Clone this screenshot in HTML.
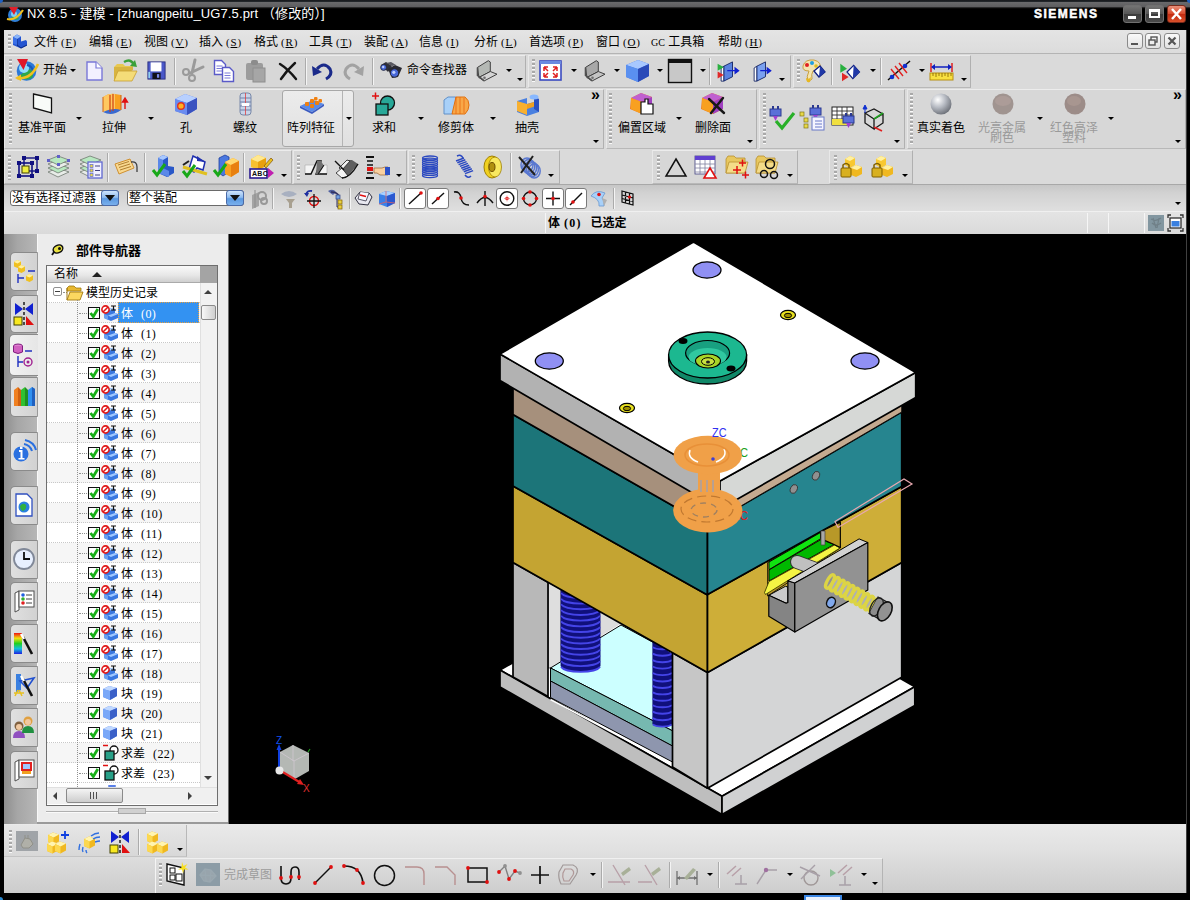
<!DOCTYPE html>
<html lang="zh-CN">
<head>
<meta charset="utf-8">
<title>NX 8.5 - 建模</title>
<style>
*{box-sizing:border-box;margin:0;padding:0}
html,body{width:1190px;height:900px;overflow:hidden;background:#000}
body{font-family:"Liberation Sans","Noto Sans CJK SC",sans-serif;font-size:12px;color:#000;position:relative}
.a{position:absolute;display:block}
.t{white-space:nowrap}
.title{font-family:"Liberation Sans","Noto Sans CJK SC",sans-serif}
.mk{font-family:"Liberation Serif","Noto Sans CJK SC",serif;letter-spacing:.8px;font-size:11px;margin-left:3px}
.nk{font-family:"Liberation Serif",serif;letter-spacing:.4px;font-size:12px}
.dd{width:0;height:0;border-left:3px solid transparent;border-right:3px solid transparent;border-top:3px solid #000}
.grip{width:3px;background:repeating-linear-gradient(#a9a9a9 0,#a9a9a9 2px,#fafafa 2px,#fafafa 3px,rgba(0,0,0,0) 3px,rgba(0,0,0,0) 4px)}
.sep{width:2px;border-left:1px solid #ababab;border-right:1px solid #f4f4f4}
svg{overflow:visible}
</style>
</head>
<body>
<div class="a " style="left:0px;top:0px;width:1190px;height:30px;background:linear-gradient(#15171a 0,#22262a 1.5px,#6a6a6c 2px,#5e5e60 6.5px,#101010 8px,#000 9px)"></div>
<div class="a " style="left:0px;top:0px;width:3px;height:3px;background:#2060c0;border-bottom-right-radius:3px"></div>
<div class="a " style="left:1187px;top:0px;width:3px;height:3px;background:#2060c0;border-bottom-left-radius:3px"></div>
<svg class="a" style="left:6px;top:5px;" width="19" height="18" viewBox="0 0 19 18"><circle cx="9" cy="10" r="7" fill="#2f7fd8"/><path d="M5 12q3 4 8 2l-2-4z" fill="#2fa84a"/><circle cx="8" cy="9" r="3" fill="#7fd0f8"/><path d="M3 2h9l-4 8z" fill="#e0202a"/><path d="M1 14q9 2 16-9" stroke="#f0c020" stroke-width="2.2" fill="none"/></svg>
<div class="a t title" style="left:27px;top:6px;font-size:13px;line-height:15px;color:#fff;letter-spacing:.12px;white-space:nowrap">NX 8.5 - 建模 - [zhuangpeitu_UG7.5.prt （修改的）]</div>
<div class="a t" style="left:1034px;top:7px;font-size:12px;line-height:14px;color:#fff;font-weight:bold;letter-spacing:1.5px;-webkit-text-stroke:.5px #fff">SIEMENS</div>
<div class="a " style="left:1123px;top:5px;width:19px;height:18px;border:1px solid #707070;border-radius:3px;background:linear-gradient(#747474,#565656 50%,#3c3c3c 51%,#4a4a4a)"></div>
<div class="a " style="left:1145px;top:5px;width:19px;height:18px;border:1px solid #707070;border-radius:3px;background:linear-gradient(#747474,#565656 50%,#3c3c3c 51%,#4a4a4a)"></div>
<div class="a " style="left:1128px;top:16px;width:8px;height:3px;background:#fff"></div>
<div class="a " style="left:1149px;top:9px;width:11px;height:9px;border:2px solid #fff;border-top-width:3px"></div>
<div class="a " style="left:1167px;top:5px;width:19px;height:18px;border:1px solid #7a2a1a;border-radius:3px;background:linear-gradient(#e8907a,#d8482a 50%,#c22a10 51%,#d8502a)"></div>
<svg class="a" style="left:1170px;top:8px;" width="13" height="12" viewBox="0 0 13 12"><path d="M2 1l9 10M11 1l-9 10" stroke="#fff" stroke-width="2.4"/></svg>
<div class="a " style="left:4px;top:30px;width:1182px;height:863px;background:#d8d8d8"></div>
<div class="a " style="left:1186px;top:30px;width:1px;height:863px;background:#404040"></div>
<div class="a " style="left:4px;top:892px;width:1183px;height:1px;background:#404040"></div>
<div class="a " style="left:4px;top:30px;width:1182px;height:24px;background:linear-gradient(#e4e4e4,#dcdcdc);border-bottom:1px solid #b4b4b4"></div>
<div class="a grip" style="left:8px;top:34px;height:16px"></div>
<svg class="a" style="left:12px;top:34px;" width="16" height="15" viewBox="0 0 16 15"><path d="M1 3l4-2.500 4 2v5l5-1.500 1 1.500v4l-6 3-8-3.500z" fill="#2454d0"/><path d="M1 3l4 2 4-2.500-4-2z" fill="#8ab4f8"/><path d="M5 5v6l4 3 6-3" stroke="#0c2a80" fill="none"/><path d="M1 3l4 2v6l-4-1.500z" fill="#3a70e8"/></svg>
<div class="a t" style="left:34px;top:35px;font-size:12px;line-height:14px;color:#000;">文件<span class="mk">(<u>F</u>)</span></div>
<div class="a t" style="left:89px;top:35px;font-size:12px;line-height:14px;color:#000;">编辑<span class="mk">(<u>E</u>)</span></div>
<div class="a t" style="left:144px;top:35px;font-size:12px;line-height:14px;color:#000;">视图<span class="mk">(<u>V</u>)</span></div>
<div class="a t" style="left:199px;top:35px;font-size:12px;line-height:14px;color:#000;">插入<span class="mk">(<u>S</u>)</span></div>
<div class="a t" style="left:254px;top:35px;font-size:12px;line-height:14px;color:#000;">格式<span class="mk">(<u>R</u>)</span></div>
<div class="a t" style="left:309px;top:35px;font-size:12px;line-height:14px;color:#000;">工具<span class="mk">(<u>T</u>)</span></div>
<div class="a t" style="left:364px;top:35px;font-size:12px;line-height:14px;color:#000;">装配<span class="mk">(<u>A</u>)</span></div>
<div class="a t" style="left:419px;top:35px;font-size:12px;line-height:14px;color:#000;">信息<span class="mk">(<u>I</u>)</span></div>
<div class="a t" style="left:474px;top:35px;font-size:12px;line-height:14px;color:#000;">分析<span class="mk">(<u>L</u>)</span></div>
<div class="a t" style="left:529px;top:35px;font-size:12px;line-height:14px;color:#000;">首选项<span class="mk">(<u>P</u>)</span></div>
<div class="a t" style="left:596px;top:35px;font-size:12px;line-height:14px;color:#000;">窗口<span class="mk">(<u>O</u>)</span></div>
<div class="a t" style="left:651px;top:35px;font-size:12px;line-height:14px;color:#000;"><span class="mk" style="letter-spacing:0;margin-left:0;font-size:10px">GC</span> 工具箱</div>
<div class="a t" style="left:718px;top:35px;font-size:12px;line-height:14px;color:#000;">帮助<span class="mk">(<u>H</u>)</span></div>
<div class="a " style="left:1127px;top:33px;width:16px;height:16px;border:1px solid #8a8a8a;border-radius:3px;background:linear-gradient(#fafafa,#e2e2e2)"></div>
<div class="a " style="left:1145px;top:33px;width:16px;height:16px;border:1px solid #8a8a8a;border-radius:3px;background:linear-gradient(#fafafa,#e2e2e2)"></div>
<div class="a " style="left:1164px;top:33px;width:16px;height:16px;border:1px solid #8a8a8a;border-radius:3px;background:linear-gradient(#fafafa,#e2e2e2)"></div>
<div class="a " style="left:1131px;top:43px;width:7px;height:2px;background:#555"></div>
<svg class="a" style="left:1148px;top:36px;" width="10" height="10" viewBox="0 0 10 10"><rect x="3" y="1" width="6" height="5" fill="none" stroke="#555" stroke-width="1.4"/><rect x="1" y="4" width="6" height="5" fill="#eee" stroke="#555" stroke-width="1.4"/></svg>
<svg class="a" style="left:1167px;top:36px;" width="10" height="10" viewBox="0 0 10 10"><path d="M1.5 1.5l7 7M8.500 1.5l-7 7" stroke="#555" stroke-width="2.2"/></svg>
<div class="a " style="left:4px;top:54px;width:1182px;height:34px;background:#dadada"></div>
<div class="a " style="left:4px;top:55px;width:522px;height:33px;border-top:1px solid #ececec;border-left:1px solid #e8e8e8;border-right:1px solid #b0b0b0;border-bottom:1px solid #b8b8b8;background:#d7d7d7"></div>
<div class="a grip" style="left:9px;top:59px;height:24px"></div>
<svg class="a" style="left:15px;top:57px;" width="25" height="26" viewBox="0 0 25 26"><circle cx="11.500" cy="14" r="9.800" fill="#2a78d8"/><path d="M4 19q6 6 13 2 3-5-2-9-5 2-11 7z" fill="#2ea84a"/><circle cx="9" cy="11" r="5" fill="#8fdcfb"/><path d="M12 8q5 1 6 6" stroke="#1a58b8" stroke-width="2" fill="none"/><path d="M2 2h11l-4.500 11z" fill="#e01828"/><path d="M2 21q14 2 21-14" stroke="#f0c020" stroke-width="2.600" fill="none"/><path d="M0 21l6-3.500 0 6.500z" fill="#f0c020"/></svg>
<div class="a t" style="left:43px;top:63px;font-size:12px;line-height:14px;color:#000;">开始</div>
<div class="a dd" style="left:70px;top:69px;border-top-color:#000"></div>
<svg class="a" style="left:85px;top:60px;" width="19" height="22" viewBox="0 0 19 22"><path d="M2 2h9l6 6v12h-15z" fill="#f2f0ff" stroke="#7a78d8" stroke-width="1.4"/><path d="M11 2v6h6" fill="#fff" stroke="#7a78d8" stroke-width="1.2"/></svg>
<svg class="a" style="left:112px;top:58px;" width="26" height="25" viewBox="0 0 26 25"><path d="M2 9l3-3h6l2 2h8v4z" fill="#e8c850"/><path d="M2 23v-14h19l-0 3z" fill="#d8b440"/><path d="M2 23l4-10h19l-5 10z" fill="#f4dc78" stroke="#c8a030" stroke-width=".8"/><path d="M12 4q7-4 10 3" stroke="#3aa03a" stroke-width="2.4" fill="none"/><path d="M18 8l7 1-2-7z" fill="#3aa03a"/></svg>
<svg class="a" style="left:147px;top:61px;" width="19" height="19" viewBox="0 0 21 21"><rect x="1" y="1" width="19" height="19" fill="#4a58c8" stroke="#2a2f80"/><rect x="4" y="1.500" width="12" height="10" fill="#fff"/><rect x="6" y="13" width="9" height="7" fill="#101018"/><rect x="11" y="14.500" width="2.500" height="4" fill="#7a88e8"/><rect x="1.500" y="12" width="2" height="7" fill="#8fd0f0"/></svg>
<div class="a sep" style="left:174px;top:58px;height:27px"></div>
<svg class="a" style="left:181px;top:59px;" width="25" height="23" viewBox="0 0 25 23"><path d="M14 1l-3 13M22 8l-13 6" stroke="#9a9a9a" stroke-width="3" stroke-linecap="round"/><circle cx="5" cy="13" r="3" fill="none" stroke="#9a9a9a" stroke-width="2"/><circle cx="11" cy="19" r="3" fill="none" stroke="#9a9a9a" stroke-width="2"/></svg>
<svg class="a" style="left:213px;top:59px;" width="23" height="24" viewBox="0 0 23 24"><path d="M1.500 1.500h7l4 4v10h-11z" fill="#fff" stroke="#5a5ac8" stroke-width="1.400"/><path d="M3.500 7h6M3.500 9.500h6M3.500 12h6" stroke="#7a7ad8"/>
    <path d="M9.500 8.500h7l4 4v10h-11z" fill="#fff" stroke="#5a5ac8" stroke-width="1.400"/><path d="M11.500 14h6M11.500 16.500h6M11.500 19h6" stroke="#7a7ad8"/></svg>
<svg class="a" style="left:245px;top:59px;" width="23" height="24" viewBox="0 0 23 24"><rect x="1" y="4" width="17" height="17" rx="2" fill="#9c9c9c"/><rect x="6" y="1" width="7" height="5" rx="2" fill="#8c8c8c"/><rect x="8" y="9" width="12" height="14" fill="#a6a6a6" stroke="#8e8e8e"/></svg>
<svg class="a" style="left:278px;top:62px;" width="20" height="18" viewBox="0 0 20 18"><path d="M2 2q8 5 16 15M17 1q-8 7-14 16" stroke="#151515" stroke-width="2.400" fill="none" stroke-linecap="round"/></svg>
<div class="a sep" style="left:305px;top:58px;height:27px"></div>
<svg class="a" style="left:311px;top:61px;" width="22" height="19" viewBox="0 0 22 19"><path d="M6 8q7-8 13 0 3 6-4 10" stroke="#1a2a8a" stroke-width="3" fill="none"/><path d="M1 5l1 10 9-4z" fill="#1a2a8a"/></svg>
<svg class="a" style="left:343px;top:61px;" width="22" height="19" viewBox="0 0 22 19"><path d="M16 8q-7-8-13 0-3 6 4 10" stroke="#a2a2a2" stroke-width="3" fill="none"/><path d="M21 5l-1 10-9-4z" fill="#a2a2a2"/></svg>
<div class="a sep" style="left:372px;top:58px;height:27px"></div>
<svg class="a" style="left:380px;top:61px;" width="23" height="20" viewBox="0 0 23 20"><path d="M1 4l5-3 6 4-4 6z" fill="#303038"/><path d="M8 8l7-4 7 3-4 9-6 1z" fill="#2a2a32"/><path d="M6 2l6 3 4-1-5-3z" fill="#585860"/><circle cx="3.600" cy="6.400" r="3" fill="#4868d8" stroke="#202028" stroke-width=".8"/><circle cx="14.500" cy="12" r="4.200" fill="#4868d8" stroke="#202028" stroke-width=".8"/><circle cx="13.800" cy="11.300" r="1.600" fill="#c0d0ff"/><circle cx="3.200" cy="6" r="1.200" fill="#c0d0ff"/></svg>
<div class="a t" style="left:407px;top:63px;font-size:12px;line-height:14px;color:#000;">命令查找器</div>
<svg class="a" style="left:474px;top:60px;" width="25" height="22" viewBox="0 0 25 22"><path d="M3.500 7.400l10.800-6.700 2 1.300v9.500l-11.400 6z" fill="#b4b8b4" stroke="#404040" stroke-width="1"/><path d="M4.900 17.500l11.400-6 6.700 2.700-12.800 6.700z" fill="#d4d4d4" stroke="#404040" stroke-width="1"/><path d="M3.500 7.400v8l6.700 5.500" fill="none" stroke="#505050" stroke-width="1.600"/><circle cx="10.500" cy="17.800" r="1.300" fill="#707070"/></svg>
<div class="a dd" style="left:506px;top:69px;border-top-color:#000"></div>
<div class="a dd" style="left:517px;top:78px;border-top-color:#000"></div>
<div class="a " style="left:528px;top:55px;width:263px;height:33px;border-top:1px solid #ececec;border-left:1px solid #e8e8e8;border-right:1px solid #b0b0b0;border-bottom:1px solid #b8b8b8;background:#d7d7d7"></div>
<div class="a grip" style="left:532px;top:59px;height:24px"></div>
<svg class="a" style="left:539px;top:60px;" width="23" height="21" viewBox="0 0 23 21"><rect x="1" y="1" width="21" height="19" fill="#fff" stroke="#3a4ac0" stroke-width="1.600"/><rect x="1" y="1" width="21" height="3" fill="#6a8ae0"/><path d="M5 7h4M5 7v4M5 7l4 4M18 7h-4M18 7v4M18 7l-4 4M5 17h4M5 17v-4M5 17l4-4M18 17h-4M18 17v-4M18 17l-4-4" stroke="#e02020" stroke-width="1.500"/></svg>
<div class="a dd" style="left:571px;top:69px;border-top-color:#000"></div>
<svg class="a" style="left:582px;top:60px;" width="25" height="22" viewBox="0 0 25 22"><path d="M3.500 7.400l10.800-6.700 2 1.300v9.500l-11.400 6z" fill="#a8a8a8" stroke="#404040" stroke-width="1"/><path d="M4.900 17.500l11.400-6 6.700 2.700-12.800 6.700z" fill="#c4c4c4" stroke="#404040" stroke-width="1"/><path d="M3.500 7.400v8l6.700 5.500" fill="none" stroke="#505050" stroke-width="1.600"/><circle cx="10.500" cy="17.800" r="1.300" fill="#707070"/></svg>
<div class="a dd" style="left:614px;top:69px;border-top-color:#000"></div>
<svg class="a" style="left:625px;top:59px;" width="25" height="24" viewBox="0 0 25 24"><path d="M1 6l12-5 11 4v12l-11 6-12-5z" fill="#4a78e0"/><path d="M1 6l12-5 11 4-11 5z" fill="#a8c8ff"/><path d="M13 10l11-5v12l-11 6z" fill="#2a4ab8"/><path d="M1 6l12 4v13l-12-5z" fill="#5a90f0"/></svg>
<div class="a dd" style="left:657px;top:69px;border-top-color:#000"></div>
<svg class="a" style="left:667px;top:58px;" width="26" height="26" viewBox="0 0 26 26"><rect x="1.500" y="1.500" width="23" height="23" fill="#c8c8c8" stroke="#101010" stroke-width="1.400"/><rect x="1" y="1" width="24" height="4" fill="#101010"/></svg>
<div class="a dd" style="left:700px;top:69px;border-top-color:#000"></div>
<div class="a sep" style="left:709px;top:58px;height:27px"></div>
<svg class="a" style="left:717px;top:61px;" width="24" height="21" viewBox="0 0 26 24"><path d="M7 6l10-5v17l-10 5z" fill="#5a82e0" stroke="#102060"/><path d="M4 8l3-2v17l-3 0z" fill="#fff" stroke="#102060"/><path d="M0 3l7 4-7 4z" fill="#2ab040"/><path d="M0 12l7 4-7 4z" fill="#e02828"/><path d="M11 11h12M20 8l4 3-4 3z" stroke="#1020d0" stroke-width="1.400" fill="#1020d0"/></svg>
<svg class="a" style="left:751px;top:61px;" width="22" height="21" viewBox="0 0 24 24"><path d="M6 6l10-5v17l-10 5z" fill="#7aa0f0" stroke="#102060"/><path d="M3 8l3-2v17l-3 0z" fill="#fff" stroke="#102060"/><path d="M10 11h11M18 8l4 3-4 3z" stroke="#1020d0" stroke-width="1.400" fill="#1020d0"/></svg>
<div class="a dd" style="left:779px;top:78px;border-top-color:#000"></div>
<div class="a " style="left:793px;top:55px;width:178px;height:33px;border-top:1px solid #ececec;border-left:1px solid #e8e8e8;border-right:1px solid #b0b0b0;border-bottom:1px solid #b8b8b8;background:#d7d7d7"></div>
<div class="a grip" style="left:797px;top:59px;height:24px"></div>
<svg class="a" style="left:800px;top:58px;" width="26" height="26" viewBox="0 0 26 26"><path d="M3 8q2-7 11-6 8 2 6 9-3 3-7 2-2 3-1 8l-4 3q-2-6 1-11-7 0-6-5z" fill="#f4e4b0" stroke="#c8a040"/><circle cx="7" cy="7" r="2" fill="#e02020"/><circle cx="12" cy="5" r="2" fill="#20a0e0"/><circle cx="16" cy="8" r="1.800" fill="#e0c020"/><path d="M14 13l6-5 5 6-6 5z" fill="#fff" stroke="#102080" stroke-width="1.300"/><path d="M20 8l5 6-6 5z" fill="#2038a8"/><path d="M6 20q3 2 5-1l-1 5q-4 1-4-4z" fill="#e8b820"/></svg>
<div class="a sep" style="left:831px;top:58px;height:27px"></div>
<svg class="a" style="left:838px;top:62px;" width="23" height="20" viewBox="0 0 26 24"><path d="M2 2l8 6-8 5z" fill="#28b040"/><path d="M4 13l8 5-8 5z" fill="#e02828"/><path d="M10 12l8-8 7 8-8 8z" fill="#fff" stroke="#102080" stroke-width="1.400"/><path d="M18 4l7 8-8 8z" fill="#2038a8"/></svg>
<div class="a dd" style="left:870px;top:69px;border-top-color:#000"></div>
<div class="a sep" style="left:880px;top:58px;height:27px"></div>
<svg class="a" style="left:886px;top:58px;" width="26" height="26" viewBox="0 0 26 26"><path d="M2 22l22-19" stroke="#101010" stroke-width="1.500"/><path d="M5 11l8 10M9 8l8 10M13 5l8 10" stroke="#e02020" stroke-width="1.400"/><circle cx="6" cy="19" r="2.300" fill="#1030d0"/><circle cx="19" cy="8" r="2.300" fill="#1030d0"/></svg>
<div class="a dd" style="left:919px;top:69px;border-top-color:#000"></div>
<svg class="a" style="left:929px;top:62px;" width="25" height="20" viewBox="0 0 25 20"><path d="M2 1v9M23 1v9" stroke="#e02020" stroke-width="1.500"/><path d="M3 5h19" stroke="#1020c0" stroke-width="1.500"/><path d="M2 5l4-3v6zM23 5l-4-3v6z" fill="#1020c0"/><rect x="1" y="11" width="23" height="7" fill="#f8e040" stroke="#b89010"/><path d="M4 11v3M7 11v4M10 11v3M13 11v4M16 11v3M19 11v4M22 11v3" stroke="#806000" stroke-width=".8"/></svg>
<div class="a dd" style="left:961px;top:78px;border-top-color:#000"></div>
<div class="a " style="left:4px;top:88px;width:1182px;height:61px;background:#dadada"></div>
<div class="a " style="left:4px;top:89px;width:600px;height:60px;border-top:1px solid #ececec;border-left:1px solid #e8e8e8;border-right:1px solid #b0b0b0;border-bottom:1px solid #b8b8b8;background:#d7d7d7"></div>
<div class="a grip" style="left:9px;top:93px;height:52px"></div>
<svg class="a" style="left:31px;top:92px;" width="23" height="23" viewBox="0 0 23 23"><path d="M2.500 2l18 4v15l-18-5z" fill="#f8fbf8" stroke="#101010" stroke-width="1.300"/></svg>
<div class="a t" style="left:18px;top:121px;font-size:12px;line-height:14px;color:#000;">基准平面</div>
<div class="a dd" style="left:76px;top:117px;border-top-color:#000"></div>
<svg class="a" style="left:101px;top:92px;" width="27" height="24" viewBox="0 0 27 24"><path d="M2 5q6-4 12-3l6 1v15q-9 5-18 0z" fill="#f8a020"/><path d="M2 5q6-4 12-3v16q-6-1-12 2z" fill="#ffc860"/><path d="M2 20q9 5 18-2-8-3-18 2z" fill="#3a6ad0"/><path d="M9 3v17M12 2v17" stroke="#d04010" stroke-width="1.200"/><path d="M2 5v15M20 3v15" stroke="#d06010"/><path d="M24 17v-9M21.500 10l2.500-4 2.500 4z" stroke="#e01010" stroke-width="1.400" fill="#e01010"/></svg>
<div class="a t" style="left:102px;top:121px;font-size:12px;line-height:14px;color:#000;">拉伸</div>
<div class="a dd" style="left:148px;top:117px;border-top-color:#000"></div>
<svg class="a" style="left:174px;top:93px;" width="24" height="23" viewBox="0 0 24 23"><path d="M1 6l10-5 12 4v11l-10 6-12-4z" fill="#5a7ae0"/><path d="M1 6l10-5 12 4-10 5z" fill="#b8d0ff"/><path d="M13 10l10-5v11l-10 6z" fill="#3a52c0"/><path d="M1 6l12 4v12l-12-4z" fill="#6a8cf0"/><circle cx="7" cy="13" r="4" fill="#e03020"/><circle cx="7" cy="13" r="2.600" fill="#ffb020"/></svg>
<div class="a t" style="left:180px;top:121px;font-size:12px;line-height:14px;color:#000;">孔</div>
<svg class="a" style="left:238px;top:92px;" width="16" height="24" viewBox="0 0 16 24"><rect x="2" y="1" width="11" height="22" rx="3" fill="#c8d4e8" stroke="#7888a8"/><path d="M2 6h11M2 10h11M2 14h11M2 18h11" stroke="#7080a8"/><path d="M7.500 1v22" stroke="#e04040" stroke-width=".8"/><rect x="4" y="11" width="7" height="3" fill="#fff"/></svg>
<div class="a t" style="left:233px;top:121px;font-size:12px;line-height:14px;color:#000;">螺纹</div>
<div class="a " style="left:282px;top:90px;width:72px;height:57px;border:1px solid #a8a8a8;border-radius:3px;background:linear-gradient(#ececec,#e0e0e0)"></div>
<div class="a " style="left:342px;top:91px;width:1px;height:55px;background:#b4b4b4"></div>
<svg class="a" style="left:299px;top:96px;" width="26" height="18" viewBox="0 0 26 18"><path d="M1 10l13-6 11 4-12 8z" fill="#5a8ae8"/><path d="M1 10l12 6v2l-12-6zM13 16l12-8v2l-12 8z" fill="#3a5ac0"/><g fill="#f08010"><rect x="6" y="6" width="4" height="4" rx="1"/><rect x="11" y="8" width="4" height="4" rx="1"/><rect x="11" y="3" width="4" height="4" rx="1"/><rect x="16" y="5" width="4" height="4" rx="1"/><rect x="15" y="1" width="3.500" height="3.500" rx="1"/><rect x="19.500" y="3" width="3.500" height="3.500" rx="1"/></g></svg>
<div class="a t" style="left:287px;top:121px;font-size:12px;line-height:14px;color:#000;">阵列特征</div>
<div class="a dd" style="left:346px;top:117px;border-top-color:#000"></div>
<svg class="a" style="left:371px;top:92px;" width="26" height="24" viewBox="0 0 26 24"><circle cx="16.500" cy="11" r="7" fill="#28a898" stroke="#101010" stroke-width="1.300"/><rect x="5" y="12" width="12" height="11" fill="#28a898" stroke="#101010" stroke-width="1.300"/><path d="M1 4h7M4.500 .5v7" stroke="#e01010" stroke-width="1.500"/></svg>
<div class="a t" style="left:372px;top:121px;font-size:12px;line-height:14px;color:#000;">求和</div>
<div class="a dd" style="left:418px;top:117px;border-top-color:#000"></div>
<svg class="a" style="left:443px;top:95px;" width="27" height="20" viewBox="0 0 27 20"><path d="M1 5l4-3h8v14l-4 3h-8z" fill="#a8d0f8" stroke="#6090c8"/><path d="M13 2h9q4 3 4 8t-4 9h-13z" fill="#f8a848" stroke="#e07010"/><path d="M13 2v17M17 2v17M21 3v15" stroke="#e86810" stroke-width=".8"/></svg>
<div class="a t" style="left:438px;top:121px;font-size:12px;line-height:14px;color:#000;">修剪体</div>
<div class="a dd" style="left:490px;top:117px;border-top-color:#000"></div>
<svg class="a" style="left:516px;top:93px;" width="25" height="23" viewBox="0 0 25 23"><path d="M1 8l10-3v6l7-2v-5l5 2v13l-12 4-10-4z" fill="#4a80e0"/><path d="M1 8l10 3v11l-10-4z" fill="#f8b030"/><path d="M11 11l7-2 5 3-12 4z" fill="#f0a020"/><path d="M18 4l5 2v13l-5-3z" fill="#2a50c0"/><ellipse cx="18" cy="4" rx="4.500" ry="2.500" fill="#88b8ff"/></svg>
<div class="a t" style="left:515px;top:121px;font-size:12px;line-height:14px;color:#000;">抽壳</div>
<div class="a t" style="left:591px;top:86px;font-size:16px;line-height:18px;color:#000;font-weight:bold">»</div>
<div class="a dd" style="left:593px;top:140px;border-top-color:#000"></div>
<div class="a " style="left:606px;top:89px;width:151px;height:60px;border-top:1px solid #ececec;border-left:1px solid #e8e8e8;border-right:1px solid #b0b0b0;border-bottom:1px solid #b8b8b8;background:#d7d7d7"></div>
<div class="a grip" style="left:609px;top:93px;height:52px"></div>
<svg class="a" style="left:630px;top:92px;" width="26" height="25" viewBox="0 0 26 25"><path d="M1 6l10-5 11 4v12l-10 5-12-5z" fill="#f08020"/><path d="M1 6l10-5 11 4-10 5z" fill="#c060d0"/><path d="M12 10l10-5v12l-10 5z" fill="#a040c0"/><path d="M1 6l11 4v12l-11-5z" fill="#f8a020"/><path d="M11 10h4v-3h3v5h5v10h-12z" fill="#fff" stroke="#101010" stroke-width="1.200"/></svg>
<div class="a t" style="left:618px;top:121px;font-size:12px;line-height:14px;color:#000;">偏置区域</div>
<div class="a dd" style="left:676px;top:117px;border-top-color:#000"></div>
<svg class="a" style="left:701px;top:92px;" width="26" height="25" viewBox="0 0 26 25"><path d="M1 6l10-5 11 4v12l-10 5-12-5z" fill="#f08020"/><path d="M1 6l10-5 11 4-10 5z" fill="#c060d0"/><path d="M12 10l10-5v12l-10 5z" fill="#a040c0"/><path d="M1 6l11 4v12l-11-5z" fill="#f8a020"/><path d="M8 7l15 14M22 6l-12 15" stroke="#181818" stroke-width="2.400" stroke-linecap="round"/></svg>
<div class="a t" style="left:695px;top:121px;font-size:12px;line-height:14px;color:#000;">删除面</div>
<div class="a dd" style="left:747px;top:140px;border-top-color:#000"></div>
<div class="a " style="left:759px;top:89px;width:146px;height:60px;border-top:1px solid #ececec;border-left:1px solid #e8e8e8;border-right:1px solid #b0b0b0;border-bottom:1px solid #b8b8b8;background:#d7d7d7"></div>
<div class="a grip" style="left:763px;top:93px;height:52px"></div>
<svg class="a" style="left:768px;top:104px;" width="27" height="27" viewBox="0 0 27 27"><rect x="2" y="5" width="11" height="7" fill="#5a70d8" stroke="#2a3890"/><rect x="4" y="2" width="2" height="3" fill="#2a3890"/><rect x="9" y="2" width="2" height="3" fill="#2a3890"/><path d="M5 12h5l-2.500 5z" fill="#a040d0"/><path d="M8 17l6 7 12-15" stroke="#28b028" stroke-width="3.200" fill="none"/></svg>
<svg class="a" style="left:799px;top:104px;" width="27" height="27" viewBox="0 0 27 27"><rect x="11" y="4" width="11" height="7" fill="#5a70d8" stroke="#2a3890"/><rect x="13" y="1" width="2" height="3" fill="#2a3890"/><rect x="18" y="1" width="2" height="3" fill="#2a3890"/><path d="M14 11h5l-2.500 5z" fill="#a040d0"/><rect x="13" y="13" width="12" height="13" fill="#f4f4ff" stroke="#6878c8"/><path d="M16 17h7M16 20h7M16 23h7" stroke="#6878c8"/><g fill="#e8d848" stroke="#807818" stroke-width=".7"><rect x="1" y="8" width="4" height="4"/><rect x="5" y="14" width="4" height="4"/><rect x="5" y="20" width="4" height="4"/></g></svg>
<svg class="a" style="left:831px;top:104px;" width="25" height="27" viewBox="0 0 25 27"><rect x="1" y="3" width="21" height="18" fill="#fff" stroke="#202020"/><path d="M1 7h21M1 11h21M1 15h21M6 3v18M11 3v18M16 3v18" stroke="#303030" stroke-width=".9"/><rect x="1" y="15" width="15" height="6" fill="#f0e040"/><rect x="12" y="12" width="11" height="7" fill="#5a70d8" stroke="#2a3890"/><rect x="14" y="9" width="2" height="3" fill="#2a3890"/><rect x="19" y="9" width="2" height="3" fill="#2a3890"/><path d="M15 19h5l-2.500 5z" fill="#a040d0"/></svg>
<svg class="a" style="left:862px;top:105px;" width="24" height="27" viewBox="0 0 24 27"><path d="M3 8l9 6v10l-9-6z M12 14l9-5v9l-9 6 M3 8l9-4 9 5" fill="none" stroke="#181818" stroke-width="1.300"/><path d="M3 8v-7M1 4l2-4 2 4z" stroke="#1030d0" fill="#1030d0"/><path d="M12 14l9-6" stroke="#20a020" stroke-width="1.600"/><path d="M12 22l8 4" stroke="#e02020" stroke-width="1.800"/></svg>
<div class="a dd" style="left:894px;top:140px;border-top-color:#000"></div>
<div class="a " style="left:907px;top:89px;width:279px;height:60px;border-top:1px solid #ececec;border-left:1px solid #e8e8e8;border-right:1px solid #b0b0b0;border-bottom:1px solid #b8b8b8;background:#d7d7d7"></div>
<div class="a grip" style="left:910px;top:93px;height:52px"></div>
<svg class="a" style="left:929px;top:92px" width="24" height="24" viewBox="0 0 24 24"><defs><radialGradient id="sph" cx=".35" cy=".3" r=".8"><stop offset="0" stop-color="#fff"/><stop offset=".45" stop-color="#b8bcc4"/><stop offset="1" stop-color="#60646c"/></radialGradient></defs><circle cx="12" cy="12" r="10.500" fill="url(#sph)"/></svg>
<div class="a t" style="left:917px;top:121px;font-size:12px;line-height:14px;color:#000;">真实着色</div>
<svg class="a" style="left:991px;top:92px;" width="24" height="24" viewBox="0 0 24 24"><circle cx="12" cy="12" r="10.500" fill="#a09490"/><ellipse cx="12" cy="9" rx="8" ry="5" fill="#ac9c98"/></svg>
<div class="a t" style="left:978px;top:121px;font-size:12px;line-height:14px;color:#9a9a9a;">光亮金属</div>
<div class="a t" style="left:990px;top:131px;font-size:12px;line-height:14px;color:#9a9a9a;">刷色</div>
<div class="a dd" style="left:1037px;top:117px;border-top-color:#000"></div>
<svg class="a" style="left:1063px;top:92px;" width="24" height="24" viewBox="0 0 24 24"><circle cx="12" cy="12" r="10.500" fill="#9c8c88"/><ellipse cx="11" cy="9" rx="7" ry="5" fill="#a89690"/></svg>
<div class="a t" style="left:1050px;top:121px;font-size:12px;line-height:14px;color:#9a9a9a;">红色高泽</div>
<div class="a t" style="left:1062px;top:131px;font-size:12px;line-height:14px;color:#9a9a9a;">塑料</div>
<div class="a dd" style="left:1108px;top:117px;border-top-color:#000"></div>
<div class="a t" style="left:1173px;top:86px;font-size:16px;line-height:18px;color:#000;font-weight:bold">»</div>
<div class="a dd" style="left:1175px;top:140px;border-top-color:#000"></div>
<div class="a " style="left:4px;top:149px;width:1182px;height:36px;background:#dadada"></div>
<div class="a " style="left:4px;top:184px;width:1182px;height:1px;background:#a8a8a8"></div>
<div class="a " style="left:4px;top:150px;width:288px;height:34px;border-top:1px solid #ececec;border-left:1px solid #e8e8e8;border-right:1px solid #b0b0b0;border-bottom:1px solid #b8b8b8;background:#d7d7d7"></div>
<div class="a grip" style="left:8px;top:155px;height:25px"></div>
<svg class="a" style="left:16px;top:155px;" width="23" height="24" viewBox="0 0 23 24"><rect x="3" y="8" width="13" height="13" fill="none" stroke="#101080" stroke-width="1.600"/><rect x="8" y="3" width="13" height="13" fill="none" stroke="#101080" stroke-width="1.400"/><rect x="6" y="11" width="7" height="7" fill="#f0f040" stroke="#404000"/><g fill="#101080"><rect x="1" y="6" width="4" height="4"/><rect x="14" y="6" width="4" height="4"/><rect x="1" y="19" width="4" height="4"/><rect x="14" y="19" width="4" height="4"/><rect x="6" y="1" width="4" height="4"/><rect x="19" y="1" width="4" height="4"/><rect x="19" y="14" width="4" height="4"/></g></svg>
<svg class="a" style="left:47px;top:155px;" width="24" height="24" viewBox="0 0 24 24"><g stroke="#707870" stroke-width=".8"><path d="M1 17l10-4 11 4-11 5z" fill="#e8ece8"/><path d="M1 13l10-4 11 4-11 5z" fill="#b8e8c0"/><path d="M1 9l10-4 11 4-11 5z" fill="#e8ece8"/><path d="M1 5l10-4 11 4-11 5z" fill="#b8e8c0"/></g><g fill="#6060c8"><rect x="0" y="4" width="3" height="3"/><rect x="10" y="0" width="3" height="3"/><rect x="20" y="4" width="3" height="3"/><rect x="10" y="8" width="3" height="3"/></g></svg>
<svg class="a" style="left:79px;top:155px;" width="24" height="24" viewBox="0 0 24 24"><g stroke="#707870" stroke-width=".8"><path d="M1 17l10-4 11 4-11 5z" fill="#e8ece8"/><path d="M1 13l10-4 11 4-11 5z" fill="#b8e8c0"/><path d="M1 9l10-4 11 4-11 5z" fill="#e8ece8"/><path d="M1 5l10-4 11 4-11 5z" fill="#b8e8c0"/></g><rect x="9" y="7" width="14" height="16" fill="#f0f0ff" stroke="#6068d0" stroke-width="1.300"/><g fill="#e8d848" stroke="#6068d0" stroke-width=".7"><rect x="11" y="9.500" width="3" height="3"/><rect x="11" y="14" width="3" height="3"/><rect x="11" y="18.500" width="3" height="3"/></g><path d="M16 11h5M16 15.500h5M16 20h5" stroke="#404080" stroke-width="1.200"/></svg>
<div class="a sep" style="left:107px;top:153px;height:29px"></div>
<svg class="a" style="left:114px;top:158px;" width="25" height="18" viewBox="0 0 25 18"><path d="M1 6l15-5 4 9-15 6z" fill="#f8d890" stroke="#d09030"/><path d="M4 7l11-3.500M5 9.500l11-3.500M6 12l11-3.500" stroke="#b08030"/><path d="M17 4q6-1 6 5v5" stroke="#404040" fill="none" stroke-width="1.300"/></svg>
<div class="a sep" style="left:144px;top:153px;height:29px"></div>
<svg class="a" style="left:151px;top:154px;" width="25" height="25" viewBox="0 0 25 25"><path d="M7 4l5-3 5 2v9l6 1v6l-7 4-9-4z" fill="#2a58c8"/><path d="M7 4l5 2v8l6 3v6l-11-4z" fill="#5a88e8"/><path d="M7 4l5-3 5 2-5 3z" fill="#a8c8ff"/><path d="M2 16l4 5 8-11" stroke="#18a818" stroke-width="3" fill="none"/></svg>
<svg class="a" style="left:182px;top:154px;" width="26" height="25" viewBox="0 0 26 25"><path d="M11 2l12 6-2 8-6-2-3 4-5-3z" fill="#fff" stroke="#2030b0" stroke-width="1.500"/><path d="M15 2l8 6-8-1z" fill="#2030b0"/><path d="M1 13l24 7" stroke="#e0c020" stroke-width="3"/><path d="M1 11l6-4" stroke="#202020" stroke-width="2"/><path d="M1 17l4 5 8-11" stroke="#18a818" stroke-width="3" fill="none"/></svg>
<svg class="a" style="left:213px;top:154px;" width="27" height="25" viewBox="0 0 27 25"><path d="M6 4l6-3 4 2v15l-6 4-4-3z" fill="#4a78e0" stroke="#2040a0" stroke-width=".8"/><path d="M12 8l8-4 6 3v11l-8 5-6-3z" fill="#f8a020"/><path d="M12 8l8-4 6 3-8 4z" fill="#ffd870"/><path d="M18 11l8-4v11l-8 5z" fill="#e88010"/><path d="M1 16l4 5 8-11" stroke="#18a818" stroke-width="3" fill="none"/></svg>
<div class="a sep" style="left:243px;top:153px;height:29px"></div>
<svg class="a" style="left:249px;top:154px;" width="26" height="25" viewBox="0 0 26 25"><path d="M2 5l7-4 8 3v8l-8 4-7-3z" fill="#f8c030"/><path d="M2 5l7-4 8 3-8 4z" fill="#ffe890"/><path d="M9 8l8-4v8l-8 4z" fill="#e8a010"/><rect x="1" y="15" width="17" height="9" fill="#fff" stroke="#2a1a90" stroke-width="1.600"/><path d="M19 14l6 5-6 5z" fill="#c020b0"/><path d="M15 12l7-8 2 2-7 8z" fill="#e8c020" stroke="#805010" stroke-width=".7"/></svg>
<div class="a t" style="left:252px;top:169px;font-size:7px;line-height:9px;color:#101010;font-weight:bold;letter-spacing:.3px;line-height:9px">ABC</div>
<div class="a dd" style="left:281px;top:174px;border-top-color:#000"></div>
<div class="a " style="left:293px;top:150px;width:114px;height:34px;border-top:1px solid #ececec;border-left:1px solid #e8e8e8;border-right:1px solid #b0b0b0;border-bottom:1px solid #b8b8b8;background:#d7d7d7"></div>
<div class="a grip" style="left:297px;top:155px;height:25px"></div>
<svg class="a" style="left:304px;top:157px;" width="24" height="21" viewBox="0 0 24 21"><path d="M1 8h10l-4 9h-6zM16 8h7v9h-9z" fill="#f4f4f4" stroke="#aaa" stroke-width=".6"/><path d="M1 17l6 0 6-13h4l-5 13h11" fill="none" stroke="#101010" stroke-width="1.400"/><path d="M13 4h4l3 5-5 8-3 0z" fill="#707070"/><path d="M14 17l6-9" stroke="#101010"/></svg>
<svg class="a" style="left:334px;top:157px;" width="25" height="22" viewBox="0 0 25 22"><path d="M5 11l8-8h5l6 4-10 12z" fill="#606060"/><path d="M5 11l8-8 3 1-8 9z" fill="#f0f0f0" stroke="#202020" stroke-width=".8"/><path d="M2 16l6-5 6 8-6 2z" fill="#f4f4f4" stroke="#202020" stroke-width=".8"/><path d="M1 4l9 9M8 21q8 0 16-14" stroke="#101010" stroke-width="1.400" fill="none"/></svg>
<svg class="a" style="left:365px;top:156px;" width="25" height="23" viewBox="0 0 25 23"><path d="M1 1h8M1 22h8" stroke="#101010" stroke-width="2"/><path d="M2 5h6M2 9h6M2 17h6" stroke="#101010" stroke-width="1.500"/><rect x="2" y="11" width="6" height="4" fill="#e01010"/><path d="M9 12h8l3-1h3v8h-8l-3-2h-3z" fill="#f8d0a0" stroke="#a07040" stroke-width=".8"/><rect x="20" y="11" width="5" height="8" fill="#2a50c8"/></svg>
<div class="a dd" style="left:396px;top:174px;border-top-color:#000"></div>
<div class="a " style="left:408px;top:150px;width:152px;height:34px;border-top:1px solid #ececec;border-left:1px solid #e8e8e8;border-right:1px solid #b0b0b0;border-bottom:1px solid #b8b8b8;background:#d7d7d7"></div>
<div class="a grip" style="left:412px;top:155px;height:25px"></div>
<svg class="a" style="left:421px;top:155px;" width="18" height="24" viewBox="0 0 18 24"><ellipse cx="9" cy="3.0" rx="7.500" ry="2" fill="none" stroke="#2a48c0" stroke-width="1.300"/><ellipse cx="9" cy="5.2" rx="7.500" ry="2" fill="none" stroke="#2a48c0" stroke-width="1.300"/><ellipse cx="9" cy="7.4" rx="7.500" ry="2" fill="none" stroke="#2a48c0" stroke-width="1.300"/><ellipse cx="9" cy="9.600000000000001" rx="7.500" ry="2" fill="none" stroke="#2a48c0" stroke-width="1.300"/><ellipse cx="9" cy="11.8" rx="7.500" ry="2" fill="none" stroke="#2a48c0" stroke-width="1.300"/><ellipse cx="9" cy="14.0" rx="7.500" ry="2" fill="none" stroke="#2a48c0" stroke-width="1.300"/><ellipse cx="9" cy="16.200000000000003" rx="7.500" ry="2" fill="none" stroke="#2a48c0" stroke-width="1.300"/><ellipse cx="9" cy="18.400000000000002" rx="7.500" ry="2" fill="none" stroke="#2a48c0" stroke-width="1.300"/><ellipse cx="9" cy="20.6" rx="7.500" ry="2" fill="none" stroke="#2a48c0" stroke-width="1.300"/></svg>
<svg class="a" style="left:452px;top:154px;" width="21" height="26" viewBox="0 0 21 26"><path d="M5 2q4-2 6 2" stroke="#2a48c0" stroke-width="1.500" fill="none"/><path d="M4.0 7.0l8-3" stroke="#2a48c0" stroke-width="1.500"/><path d="M5.3 8.8l8-3" stroke="#2a48c0" stroke-width="1.500"/><path d="M6.6 10.6l8-3" stroke="#2a48c0" stroke-width="1.500"/><path d="M7.9 12.4l8-3" stroke="#2a48c0" stroke-width="1.500"/><path d="M9.2 14.2l8-3" stroke="#2a48c0" stroke-width="1.500"/><path d="M10.5 16.0l8-3" stroke="#2a48c0" stroke-width="1.500"/><path d="M11.8 17.8l8-3" stroke="#2a48c0" stroke-width="1.500"/><path d="M13.1 19.6l8-3" stroke="#2a48c0" stroke-width="1.500"/><path d="M13 21q3 4 6 1" stroke="#2a48c0" stroke-width="1.500" fill="none"/></svg>
<svg class="a" style="left:483px;top:155px;" width="20" height="24" viewBox="0 0 20 24"><ellipse cx="9" cy="12" rx="8" ry="11" fill="#f0d020" stroke="#a08000"/><ellipse cx="12" cy="12" rx="6.500" ry="10" fill="#f8e860" stroke="#a08000" stroke-width=".8"/><ellipse cx="9" cy="12" rx="3" ry="4.500" fill="#b09010" stroke="#705000"/></svg>
<div class="a sep" style="left:510px;top:153px;height:29px"></div>
<svg class="a" style="left:517px;top:155px;" width="25" height="24" viewBox="0 0 25 24"><ellipse cx="10.0" cy="10.0" rx="6" ry="7" fill="none" stroke="#5a78d0" stroke-width="1.500"/><ellipse cx="11.8" cy="11.5" rx="6" ry="7" fill="none" stroke="#5a78d0" stroke-width="1.500"/><ellipse cx="13.6" cy="13.0" rx="6" ry="7" fill="none" stroke="#5a78d0" stroke-width="1.500"/><ellipse cx="15.4" cy="14.5" rx="6" ry="7" fill="none" stroke="#5a78d0" stroke-width="1.500"/><ellipse cx="17.2" cy="16.0" rx="6" ry="7" fill="none" stroke="#5a78d0" stroke-width="1.500"/><path d="M2 2l16 18M16 1l-12 17" stroke="#202020" stroke-width="2"/></svg>
<div class="a dd" style="left:548px;top:174px;border-top-color:#000"></div>
<div class="a " style="left:652px;top:150px;width:146px;height:34px;border-top:1px solid #ececec;border-left:1px solid #e8e8e8;border-right:1px solid #b0b0b0;border-bottom:1px solid #b8b8b8;background:#d7d7d7"></div>
<div class="a grip" style="left:657px;top:155px;height:25px"></div>
<svg class="a" style="left:664px;top:157px;" width="24" height="20" viewBox="0 0 24 20"><path d="M12 2l10 17h-20z" fill="none" stroke="#101010" stroke-width="1.500"/></svg>
<svg class="a" style="left:694px;top:155px;" width="24" height="24" viewBox="0 0 24 24"><rect x="1" y="1" width="20" height="18" fill="#fff" stroke="#404080" stroke-width=".8"/><rect x="1" y="1" width="20" height="4" fill="#6040d0"/><path d="M1 9h20M1 13h20M1 17h20M6 5v14M11 5v14M16 5v14" stroke="#8080a0" stroke-width=".8"/><path d="M16 13l6 10h-12z" fill="#fff" stroke="#e01010" stroke-width="1.600"/></svg>
<svg class="a" style="left:725px;top:155px;" width="25" height="25" viewBox="0 0 25 25"><path d="M1 4l2-3h6l2 2h9v15h-19z" fill="#e8c860" stroke="#b89030" stroke-width=".8"/><path d="M1 18l3-11h19l-3 11z" fill="#f4dc88" stroke="#b89030" stroke-width=".8"/><path d="M8 15h8M12 11v8M14 8h7M17.500 4.500v7M17 20h7M20.500 16.500v7" stroke="#e01010" stroke-width="1.500"/></svg>
<svg class="a" style="left:755px;top:155px;" width="25" height="25" viewBox="0 0 25 25"><path d="M1 4l2-3h6l2 2h9v15h-19z" fill="#e8c860" stroke="#b89030" stroke-width=".8"/><path d="M1 18l3-11h19l-3 11z" fill="#f4dc88" stroke="#b89030" stroke-width=".8"/><circle cx="15" cy="9" r="4.500" fill="none" stroke="#101010" stroke-width="1.500"/><circle cx="9" cy="19" r="3.500" fill="none" stroke="#101010" stroke-width="1.500"/><circle cx="19" cy="20" r="3.500" fill="none" stroke="#101010" stroke-width="1.500"/></svg>
<div class="a dd" style="left:787px;top:174px;border-top-color:#000"></div>
<div class="a " style="left:829px;top:150px;width:84px;height:34px;border-top:1px solid #ececec;border-left:1px solid #e8e8e8;border-right:1px solid #b0b0b0;border-bottom:1px solid #b8b8b8;background:#d7d7d7"></div>
<div class="a grip" style="left:834px;top:155px;height:25px"></div>
<svg class="a" style="left:840px;top:155px;" width="24" height="24" viewBox="0 0 24 24"><path d="M5 4l5-3 5 2v7l-5 3-5-3z" fill="#f8c830"/><path d="M5 4l5-3 5 2-5 3z" fill="#fff0a0"/><path d="M11 13l5-3 6 2v7l-6 3-5-2z" fill="#f0b820"/><path d="M11 13l5-3 6 2-5 3z" fill="#fff0a0"/><rect x="1" y="13" width="10" height="9" rx="1" fill="#d8b020" stroke="#806000"/><path d="M3 13v-3q3-3 6 0v3" fill="none" stroke="#806000" stroke-width="1.500"/></svg>
<svg class="a" style="left:871px;top:155px;" width="24" height="24" viewBox="0 0 24 24"><path d="M5 4l5-3 5 2v7l-5 3-5-3z" fill="#f8c830"/><path d="M5 4l5-3 5 2-5 3z" fill="#fff0a0"/><path d="M11 13l5-3 6 2v7l-6 3-5-2z" fill="#f0b820"/><path d="M11 13l5-3 6 2-5 3z" fill="#fff0a0"/><rect x="1" y="13" width="10" height="9" rx="1" fill="#d8b020" stroke="#806000"/><path d="M3 13v-3q3-3 6 0v3" fill="none" stroke="#806000" stroke-width="1.500"/></svg>
<div class="a dd" style="left:902px;top:174px;border-top-color:#000"></div>
<div class="a " style="left:4px;top:185px;width:1182px;height:27px;background:linear-gradient(#c6c6c6,#d2d2d2 30%,#e0e0e0)"></div>
<div class="a " style="left:4px;top:211px;width:1182px;height:1px;background:#f0f0f0"></div>
<div class="a " style="left:10px;top:190px;width:109px;height:16px;border:1px solid #6a6a6a;border-radius:3px;background:#fff"></div>
<div class="a t" style="left:12px;top:191px;font-size:12px;line-height:14px;color:#000;line-height:14px">没有选择过滤器</div>
<div class="a " style="left:101px;top:190px;width:18px;height:16px;border:1px solid #4a6aa8;border-radius:3px;background:linear-gradient(#cfe4fb,#8fbcf0 45%,#5a98e0 55%,#7ab0ec)"></div>
<div class="a" style="left:105px;top:195px;width:0;height:0;border-left:5px solid transparent;border-right:5px solid transparent;border-top:6px solid #101010"></div>
<div class="a " style="left:127px;top:190px;width:117px;height:16px;border:1px solid #6a6a6a;border-radius:3px;background:#fff"></div>
<div class="a t" style="left:129px;top:191px;font-size:12px;line-height:14px;color:#000;line-height:14px">整个装配</div>
<div class="a " style="left:226px;top:190px;width:18px;height:16px;border:1px solid #4a6aa8;border-radius:3px;background:linear-gradient(#cfe4fb,#8fbcf0 45%,#5a98e0 55%,#7ab0ec)"></div>
<div class="a" style="left:230px;top:195px;width:0;height:0;border-left:5px solid transparent;border-right:5px solid transparent;border-top:6px solid #101010"></div>
<svg class="a" style="left:249px;top:188px;" width="20" height="21" viewBox="0 0 20 21"><path d="M3 7l7-3v14l-7 3z" fill="#a4a4a4"/><path d="M6 2v18" stroke="#8c8c8c"/><circle cx="13" cy="8" r="4" fill="none" stroke="#989898" stroke-width="2"/><circle cx="15" cy="13" r="3" fill="none" stroke="#989898" stroke-width="2"/></svg>
<div class="a sep" style="left:272px;top:188px;height:21px"></div>
<svg class="a" style="left:280px;top:189px;" width="19" height="20" viewBox="0 0 19 20"><path d="M1 5q8-6 16 0-8 6-16 0z" fill="#a8b0c0"/><path d="M6 10h9l-3 4v5h-3v-5z" fill="#a8a090"/></svg>
<svg class="a" style="left:303px;top:188px;" width="19" height="21" viewBox="0 0 19 21"><path d="M3 7q1-5 6-4" stroke="#2030a0" stroke-width="1.800" fill="none"/><path d="M1 5l3 4 2-4z" fill="#2030a0"/><circle cx="11" cy="13" r="4.500" fill="none" stroke="#e01010" stroke-width="1.500"/><path d="M11 6v14M4 13h14" stroke="#101010" stroke-width="1.300"/></svg>
<svg class="a" style="left:326px;top:188px;" width="19" height="21" viewBox="0 0 19 21"><path d="M2 3q5-3 8 1l-3 3q-3-2-5-4z" fill="#5060a0"/><path d="M5 4q6 0 8 4" stroke="#303060" stroke-width="1.500" fill="none"/><rect x="10" y="7" width="4" height="4" fill="#70a0e0" stroke="#304080" stroke-width=".7"/><rect x="12" y="12" width="4" height="4" fill="#e8d040" stroke="#806000" stroke-width=".7"/><rect x="12" y="17" width="4" height="4" fill="#e8d040" stroke="#806000" stroke-width=".7"/><path d="M11 11v8h1" stroke="#303060" fill="none"/></svg>
<div class="a sep" style="left:349px;top:188px;height:21px"></div>
<svg class="a" style="left:354px;top:190px;" width="19" height="17" viewBox="0 0 19 17"><path d="M1 8l5-6 9 1 3 4-4 8-9-1z" fill="#e8e8f0" stroke="#303040"/><path d="M6 2l-2 7 8 2 3-8" fill="#f8f8ff" stroke="#303040" stroke-width=".8"/><path d="M6 5l6 1.500" stroke="#e01010" stroke-width="1.800"/></svg>
<svg class="a" style="left:378px;top:189px;" width="18" height="19" viewBox="0 0 18 19"><path d="M1 5l7-3 9 2v10l-8 4-8-3z" fill="#3a80e8"/><path d="M1 5l7-3 9 2-8 3z" fill="#a8d0ff"/><path d="M9 7l8-3v10l-8 4z" fill="#2a58d0"/><path d="M8 2v11M1 15l7-2 9 1" stroke="#e06060" stroke-width=".8" fill="none"/></svg>
<div class="a sep" style="left:399px;top:188px;height:21px"></div>
<div class="a " style="left:404px;top:188px;width:22px;height:21px;border:1px solid #7a7a7a;border-radius:3px;background:#fff"></div>
<svg class="a" style="left:405px;top:189px;" width="20" height="19" viewBox="0 0 20 19"><path d="M4 15l12-11" stroke="#101010" stroke-width="1.400"/><circle cx="16" cy="4" r="1.800" fill="#e01010"/></svg>
<div class="a " style="left:427px;top:188px;width:22px;height:21px;border:1px solid #7a7a7a;border-radius:3px;background:#fff"></div>
<svg class="a" style="left:428px;top:189px;" width="20" height="19" viewBox="0 0 20 19"><path d="M4 15l12-11" stroke="#101010" stroke-width="1.400"/><circle cx="10" cy="9.500" r="1.800" fill="#e01010"/></svg>
<svg class="a" style="left:453px;top:189px;" width="18" height="19" viewBox="0 0 18 19"><path d="M1 3q6-1 7 6t8 7" stroke="#101010" stroke-width="1.500" fill="none"/><circle cx="8" cy="9" r="1.800" fill="#e01010"/></svg>
<svg class="a" style="left:476px;top:189px;" width="18" height="19" viewBox="0 0 18 19"><path d="M9 2v15M1 14q8-11 16 0" stroke="#101010" stroke-width="1.400" fill="none"/><circle cx="9" cy="7.500" r="1.800" fill="#e01010"/></svg>
<div class="a " style="left:496px;top:188px;width:22px;height:21px;border:1px solid #7a7a7a;border-radius:3px;background:#fff"></div>
<svg class="a" style="left:497px;top:189px;" width="20" height="19" viewBox="0 0 20 19"><circle cx="10" cy="9.500" r="6.800" fill="none" stroke="#101010" stroke-width="1.400"/><circle cx="10" cy="9.500" r="1.800" fill="#e01010"/><path d="M7 9.500h6M10 6.500v6" stroke="#f08080" stroke-width=".7"/></svg>
<svg class="a" style="left:521px;top:189px;" width="18" height="19" viewBox="0 0 18 19"><circle cx="9" cy="9.500" r="6.500" fill="none" stroke="#101010" stroke-width="1.400"/><g fill="#e01010"><circle cx="9" cy="3" r="1.800"/><circle cx="9" cy="16" r="1.800"/><circle cx="2.500" cy="9.500" r="1.800"/><circle cx="15.500" cy="9.500" r="1.800"/></g></svg>
<div class="a " style="left:542px;top:188px;width:22px;height:21px;border:1px solid #7a7a7a;border-radius:3px;background:#fff"></div>
<svg class="a" style="left:543px;top:189px;" width="20" height="19" viewBox="0 0 20 19"><path d="M3 9.500h14M10 2.500v14" stroke="#101010" stroke-width="1.400"/><circle cx="10" cy="9.500" r="1.800" fill="#e01010"/></svg>
<div class="a " style="left:565px;top:188px;width:22px;height:21px;border:1px solid #7a7a7a;border-radius:3px;background:#fff"></div>
<svg class="a" style="left:566px;top:189px;" width="20" height="19" viewBox="0 0 20 19"><path d="M4 16l12-12" stroke="#101010" stroke-width="1.400"/><circle cx="7" cy="13" r="1.800" fill="#e01010"/></svg>
<svg class="a" style="left:590px;top:189px;" width="18" height="19" viewBox="0 0 18 19"><path d="M1 7q5-7 14-3l-3 5q3 3 2 8h-5q1-7-8-10z" fill="#a8d0f8" stroke="#6898d0" stroke-width=".8"/><path d="M12 9l5 2-3 6z" fill="#b0b0b0"/><circle cx="9" cy="5.500" r="1.800" fill="#e01010"/></svg>
<div class="a sep" style="left:613px;top:188px;height:21px"></div>
<svg class="a" style="left:621px;top:190px;" width="14" height="16" viewBox="0 0 14 16"><path d="M1 1l11 3v11l-11-3zM1 5l11 3M1 8.500l11 3M4.500 2v11M8.500 3v11" fill="none" stroke="#101010" stroke-width="1.200"/><circle cx="8.500" cy="7" r="1.600" fill="#e01010"/></svg>
<div class="a dd" style="left:1175px;top:202px;border-top-color:#000"></div>
<div class="a " style="left:4px;top:212px;width:1182px;height:22px;background:linear-gradient(#e4e4e4,#dadada)"></div>
<div class="a t" style="left:548px;top:216px;font-size:12px;line-height:14px;color:#000;font-weight:bold">体<span class="nk" style="margin-left:4px;margin-right:9px;letter-spacing:1.2px">(0)</span>已选定</div>
<div class="a " style="left:545px;top:213px;width:1px;height:20px;background:#f6f6f6"></div>
<div class="a " style="left:1087px;top:213px;width:1px;height:20px;background:#f6f6f6"></div>
<div class="a " style="left:1108px;top:213px;width:1px;height:20px;background:#f6f6f6"></div>
<div class="a " style="left:1144px;top:213px;width:1px;height:20px;background:#f6f6f6"></div>
<div class="a " style="left:1148px;top:215px;width:16px;height:16px;background:#8296a0"></div>
<svg class="a" style="left:1148px;top:215px;" width="16" height="16" viewBox="0 0 16 16"><path d="M3 4q5 3 10-1M4 8q4 4 9 0M5 3l3 10M11 3l-2 10" stroke="#708088" stroke-width="1.200" fill="none"/></svg>
<svg class="a" style="left:1167px;top:214px;" width="17" height="18" viewBox="0 0 17 18"><rect x="3" y="4" width="11" height="10" fill="#fff" stroke="#303030" stroke-width="1.300"/><rect x="4.500" y="7" width="8" height="5.500" fill="#3a80e0"/><path d="M1 4v-3h3M16 4v-3h-3M1 14v3h3M16 14v3h-3" stroke="#303030" stroke-width="1.300" fill="none"/></svg>
<div class="a " style="left:229px;top:234px;width:957px;height:590px;background:#000"></div>
<svg class="a" style="left:229px;top:234px" width="957" height="590" viewBox="229 234 957 590"><defs><clipPath id="cl"><polygon points="548,582.3 707.5,672.4 707.5,800 548,800"/></clipPath><clipPath id="cy"><polygon points="513,562.5 707.5,672.4 707.5,800 513,800"/></clipPath></defs><polygon points="500,670 693,560 914.8,686.8 722,796.3" fill="#ffffff" stroke="#000" stroke-width="1.7" stroke-linejoin="round" /><polygon points="500,670 722,796.3 722,814.5 500,687" fill="#bebebe" stroke="#000" stroke-width="1.7" stroke-linejoin="round" /><polygon points="722,796.3 914.8,686.8 914.8,705.5 722,814.5" fill="#d0d1d2" stroke="#000" stroke-width="1.7" stroke-linejoin="round" /><polygon points="548,582.3 621,623.6 550.5,668 548,668" fill="#dcdcdc" stroke="none" stroke-width="1.7" stroke-linejoin="round" /><polygon points="548,582.3 561,589.6 561,668 548,668" fill="#dedede" stroke="#000" stroke-width="0.6" stroke-linejoin="round" /><polygon points="550.5,668 621,625 672.5,652.8 672.5,730.8" fill="#ccffff" stroke="#000" stroke-width="1" stroke-linejoin="round" /><polygon points="550.5,668 672.5,730.8 672.5,746 550.5,681" fill="#76b8b0" stroke="#000" stroke-width="1" stroke-linejoin="round" /><polygon points="550.5,681 672.5,746 672.5,762 550.5,697.5" fill="#8e96ae" stroke="#000" stroke-width="1" stroke-linejoin="round" /><path d="M550.5 699.5L672.5 764.5" stroke="#fff" stroke-width="1.500"/><g clip-path="url(#cy)"><g><path d="M560.6 586L600.5 612L600.5 665.616A19.94999999999999 6.383999999999997 0 0 1 560.6 665.616Z" fill="#10107c"/><path d="M561.1 587.3A19.94999999999999 6.383999999999997 0 0 0 600.0 587.3" stroke="#4444e8" stroke-width="1.900" fill="none"/><path d="M561.1 593.0A19.94999999999999 6.383999999999997 0 0 0 600.0 593.0" stroke="#4444e8" stroke-width="1.900" fill="none"/><path d="M561.1 598.7A19.94999999999999 6.383999999999997 0 0 0 600.0 598.7" stroke="#4444e8" stroke-width="1.900" fill="none"/><path d="M561.1 604.3A19.94999999999999 6.383999999999997 0 0 0 600.0 604.3" stroke="#4444e8" stroke-width="1.900" fill="none"/><path d="M561.1 610.0A19.94999999999999 6.383999999999997 0 0 0 600.0 610.0" stroke="#4444e8" stroke-width="1.900" fill="none"/><path d="M561.1 615.7A19.94999999999999 6.383999999999997 0 0 0 600.0 615.7" stroke="#4444e8" stroke-width="1.900" fill="none"/><path d="M561.1 621.4A19.94999999999999 6.383999999999997 0 0 0 600.0 621.4" stroke="#4444e8" stroke-width="1.900" fill="none"/><path d="M561.1 627.1A19.94999999999999 6.383999999999997 0 0 0 600.0 627.1" stroke="#4444e8" stroke-width="1.900" fill="none"/><path d="M561.1 632.8A19.94999999999999 6.383999999999997 0 0 0 600.0 632.8" stroke="#4444e8" stroke-width="1.900" fill="none"/><path d="M561.1 638.5A19.94999999999999 6.383999999999997 0 0 0 600.0 638.5" stroke="#4444e8" stroke-width="1.900" fill="none"/><path d="M561.1 644.1A19.94999999999999 6.383999999999997 0 0 0 600.0 644.1" stroke="#4444e8" stroke-width="1.900" fill="none"/><path d="M561.1 649.8A19.94999999999999 6.383999999999997 0 0 0 600.0 649.8" stroke="#4444e8" stroke-width="1.900" fill="none"/><path d="M561.1 655.5A19.94999999999999 6.383999999999997 0 0 0 600.0 655.5" stroke="#4444e8" stroke-width="1.900" fill="none"/><path d="M561.1 661.2A19.94999999999999 6.383999999999997 0 0 0 600.0 661.2" stroke="#4444e8" stroke-width="1.900" fill="none"/><path d="M561.1 666.9A19.94999999999999 6.383999999999997 0 0 0 600.0 666.9" stroke="#4444e8" stroke-width="1.900" fill="none"/></g><g><path d="M652.4 640L672.5 654L672.5 723.784A10.050000000000011 3.2160000000000037 0 0 1 652.4 723.784Z" fill="#10107c"/><path d="M652.9 640.6A10.050000000000011 3.2160000000000037 0 0 0 672.0 640.6" stroke="#4444e8" stroke-width="1.900" fill="none"/><path d="M652.9 647.1A10.050000000000011 3.2160000000000037 0 0 0 672.0 647.1" stroke="#4444e8" stroke-width="1.900" fill="none"/><path d="M652.9 653.5A10.050000000000011 3.2160000000000037 0 0 0 672.0 653.5" stroke="#4444e8" stroke-width="1.900" fill="none"/><path d="M652.9 660.0A10.050000000000011 3.2160000000000037 0 0 0 672.0 660.0" stroke="#4444e8" stroke-width="1.900" fill="none"/><path d="M652.9 666.4A10.050000000000011 3.2160000000000037 0 0 0 672.0 666.4" stroke="#4444e8" stroke-width="1.900" fill="none"/><path d="M652.9 672.9A10.050000000000011 3.2160000000000037 0 0 0 672.0 672.9" stroke="#4444e8" stroke-width="1.900" fill="none"/><path d="M652.9 679.3A10.050000000000011 3.2160000000000037 0 0 0 672.0 679.3" stroke="#4444e8" stroke-width="1.900" fill="none"/><path d="M652.9 685.8A10.050000000000011 3.2160000000000037 0 0 0 672.0 685.8" stroke="#4444e8" stroke-width="1.900" fill="none"/><path d="M652.9 692.2A10.050000000000011 3.2160000000000037 0 0 0 672.0 692.2" stroke="#4444e8" stroke-width="1.900" fill="none"/><path d="M652.9 698.6A10.050000000000011 3.2160000000000037 0 0 0 672.0 698.6" stroke="#4444e8" stroke-width="1.900" fill="none"/><path d="M652.9 705.1A10.050000000000011 3.2160000000000037 0 0 0 672.0 705.1" stroke="#4444e8" stroke-width="1.900" fill="none"/><path d="M652.9 711.5A10.050000000000011 3.2160000000000037 0 0 0 672.0 711.5" stroke="#4444e8" stroke-width="1.900" fill="none"/><path d="M652.9 718.0A10.050000000000011 3.2160000000000037 0 0 0 672.0 718.0" stroke="#4444e8" stroke-width="1.900" fill="none"/><path d="M652.9 724.4A10.050000000000011 3.2160000000000037 0 0 0 672.0 724.4" stroke="#4444e8" stroke-width="1.900" fill="none"/></g></g><polygon points="513,562.5 548,582.3 548,696.5 513,677" fill="#b8b8b8" stroke="#000" stroke-width="1.7" stroke-linejoin="round" /><polygon points="672.5,652.8 707.5,672.4 707.5,788.2 672.5,767" fill="#c6c6c6" stroke="#000" stroke-width="1.7" stroke-linejoin="round" /><polygon points="707.5,672.4 901.7,562.5 901.7,677.3 707.5,788.2" fill="#d4d5d6" stroke="#000" stroke-width="1.7" stroke-linejoin="round" /><polygon points="513,486 707.5,595 707.5,672.4 513,562.5" fill="#c4a432" stroke="#000" stroke-width="1.7" stroke-linejoin="round" /><polygon points="707.5,594.4 901.7,486.6 901.7,562.5 707.5,672.4" fill="#ceae38" stroke="#000" stroke-width="1.7" stroke-linejoin="round" /><polygon points="513,414.6 707.5,525.5 707.5,595 513,486" fill="#1c7579" stroke="#000" stroke-width="1.7" stroke-linejoin="round" /><polygon points="707.5,525.5 901.7,412 901.7,486.6 707.5,594.4" fill="#26858f" stroke="#000" stroke-width="1.7" stroke-linejoin="round" /><polygon points="513,386 707.5,498 707.5,525.5 513,414.6" fill="#a6907c" stroke="#000" stroke-width="1.7" stroke-linejoin="round" /><polygon points="707.5,512 901.7,402 901.7,412 707.5,525.5" fill="#c4aa90" stroke="#000" stroke-width="0.8" stroke-linejoin="round" /><polygon points="767.6,562.5 822.3,531.7 840.3,522.3 840.3,548 767.6,596" fill="#b89828" stroke="#000" stroke-width="0.8" stroke-linejoin="round" /><polygon points="769,562 820.5,532.5 820.5,538.8 769,569.7" fill="#10e410" stroke="#000" stroke-width="0.9" stroke-linejoin="round" /><polygon points="769,570 821,539.5 826.5,541.5 834,544.5 769,581" fill="#00b800" stroke="#000" stroke-width="0.9" stroke-linejoin="round" /><polygon points="769,581.5 834.5,545 840,548 765.5,594.5 764.5,592.5" fill="#f4f444" stroke="#404000" stroke-width="0.9" stroke-linejoin="round" /><polygon points="824,530 840.3,522.3 840.3,547.6 833,544 824,540" fill="#b89828" stroke="#000" stroke-width="1.1" stroke-linejoin="round" /><rect x="821" y="531" width="4" height="14" fill="#a8a8a8" stroke="#404040" stroke-width=".7"/><path d="M797 562L816 569" stroke="#303030" stroke-width="14" stroke-linecap="round"/><path d="M797 562L816 569" stroke="#c0c0c0" stroke-width="12" stroke-linecap="round"/><polygon points="768.8,595.3 785.4,586.3 787.9,587 787.9,602.5 786.1,603.2" fill="#cacaca" stroke="#000" stroke-width="1" stroke-linejoin="round" /><polygon points="768.8,595.3 786.1,603.2 787.9,602.5 787.9,580.8 794.8,583 794.8,632 768.8,616.2" fill="#848484" stroke="#000" stroke-width="1.2" stroke-linejoin="round" /><polygon points="787.9,580.8 859.1,538.9 867.8,542.5 794.8,583" fill="#d2d2d2" stroke="#000" stroke-width="1" stroke-linejoin="round" /><polygon points="794.8,583 867.8,542.5 867.8,590 794.8,632" fill="#929292" stroke="#000" stroke-width="1.2" stroke-linejoin="round" /><path d="M831 582L879 608" stroke="#b0b0b0" stroke-width="13"/><ellipse cx="830.0" cy="581.5" rx="2.800" ry="7.600" transform="rotate(29 830.0 581.5)" fill="none" stroke="#dcd444" stroke-width="3.200"/><ellipse cx="834.9" cy="584.2" rx="2.800" ry="7.600" transform="rotate(29 834.9 584.2)" fill="none" stroke="#dcd444" stroke-width="3.200"/><ellipse cx="839.8" cy="586.9" rx="2.800" ry="7.600" transform="rotate(29 839.8 586.9)" fill="none" stroke="#dcd444" stroke-width="3.200"/><ellipse cx="844.7" cy="589.6" rx="2.800" ry="7.600" transform="rotate(29 844.7 589.6)" fill="none" stroke="#dcd444" stroke-width="3.200"/><ellipse cx="849.6" cy="592.3" rx="2.800" ry="7.600" transform="rotate(29 849.6 592.3)" fill="none" stroke="#dcd444" stroke-width="3.200"/><ellipse cx="854.5" cy="595.0" rx="2.800" ry="7.600" transform="rotate(29 854.5 595.0)" fill="none" stroke="#dcd444" stroke-width="3.200"/><ellipse cx="859.4" cy="597.7" rx="2.800" ry="7.600" transform="rotate(29 859.4 597.7)" fill="none" stroke="#dcd444" stroke-width="3.200"/><ellipse cx="864.3" cy="600.4" rx="2.800" ry="7.600" transform="rotate(29 864.3 600.4)" fill="none" stroke="#dcd444" stroke-width="3.200"/><ellipse cx="869.2" cy="603.1" rx="2.800" ry="7.600" transform="rotate(29 869.2 603.1)" fill="none" stroke="#dcd444" stroke-width="3.200"/><ellipse cx="874.1" cy="605.8" rx="2.800" ry="7.600" transform="rotate(29 874.1 605.8)" fill="none" stroke="#dcd444" stroke-width="3.200"/><path d="M873 605L884 611" stroke="#181818" stroke-width="20"/><path d="M873.500 605.300L884 611" stroke="#8c8c8c" stroke-width="17.500"/><ellipse cx="876.500" cy="607" rx="5.500" ry="10" transform="rotate(29 876.500 607)" fill="none" stroke="#202020" stroke-width="1.300"/><ellipse cx="884.800" cy="611.400" rx="6.200" ry="10.300" transform="rotate(29 884.800 611.400)" fill="#929292" stroke="#101010" stroke-width="1.600"/><ellipse cx="831" cy="602.500" rx="4.200" ry="5.400" transform="rotate(25 831 602.500)" fill="#80a8ec" stroke="#101010" stroke-width="1.500"/><ellipse cx="793.800" cy="489" rx="3.300" ry="4.600" transform="rotate(25 793.800 489)" fill="#909090" stroke="#303030" stroke-width=".8"/><ellipse cx="816" cy="475.800" rx="3.300" ry="4.600" transform="rotate(25 816 475.800)" fill="#909090" stroke="#303030" stroke-width=".8"/><path d="M835 521.500L904 479L912 484L906 487.500L838 527.500z" fill="none" stroke="#e8a8b0" stroke-width="1.200"/><polygon points="500,354 720,481 720,509 500,380.5" fill="#b2b2b2" stroke="#000" stroke-width="1.7" stroke-linejoin="round" /><polygon points="720,481 915.7,372.4 915.7,397.6 720,509" fill="#d6d8d6" stroke="#000" stroke-width="1.7" stroke-linejoin="round" /><polygon points="693.5,242 915.7,372.4 720,481 500,354" fill="#ffffff" stroke="#000" stroke-width="1.7" stroke-linejoin="round" /><ellipse cx="707" cy="270" rx="14" ry="8.200" fill="#9090f4" stroke="#000" stroke-width="1.300"/><ellipse cx="549.3" cy="361" rx="14" ry="8.200" fill="#9090f4" stroke="#000" stroke-width="1.300"/><ellipse cx="865" cy="361" rx="14" ry="8.200" fill="#9090f4" stroke="#000" stroke-width="1.300"/><ellipse cx="627" cy="408" rx="7.500" ry="4.600" fill="#e8e020" stroke="#000" stroke-width="1.200"/><ellipse cx="627" cy="408.5" rx="3.600" ry="2.200" fill="#a09000" stroke="#000" stroke-width="1"/><ellipse cx="788" cy="315" rx="7.500" ry="4.600" fill="#e8e020" stroke="#000" stroke-width="1.200"/><ellipse cx="788" cy="315.5" rx="3.600" ry="2.200" fill="#a09000" stroke="#000" stroke-width="1"/><path d="M668.600 355v6a39 23 0 0 0 78 0v-6z" fill="#108868" stroke="#000" stroke-width="1.300"/><ellipse cx="707.600" cy="355" rx="39" ry="23" fill="#1cb890" stroke="#000" stroke-width="1.300"/><ellipse cx="707.600" cy="353" rx="22" ry="12.500" fill="#18a080" stroke="#000" stroke-width="1.200"/><ellipse cx="707.600" cy="357" rx="19" ry="9" fill="#30c8a0" stroke="none"/><ellipse cx="708" cy="361" rx="12.500" ry="7" fill="#a8d428" stroke="#000" stroke-width="1.100"/><ellipse cx="708" cy="361.500" rx="6.500" ry="3.800" fill="#c8e040" stroke="#000" stroke-width="1"/><ellipse cx="708" cy="362" rx="2" ry="1.500" fill="#202020"/><ellipse cx="683" cy="341" rx="4.500" ry="3" fill="#000"/><ellipse cx="731" cy="368.500" rx="4.500" ry="3" fill="#000"/><text x="732.500" y="457" font-size="12" textLength="15.500" lengthAdjust="spacingAndGlyphs" fill="#20a020" font-family="Liberation Sans,sans-serif">YC</text><text x="732.500" y="520" font-size="12" textLength="15.500" lengthAdjust="spacingAndGlyphs" fill="#e02020" font-family="Liberation Sans,sans-serif">XC</text><rect x="698" y="468" width="22" height="30" fill="#f0a048"/><ellipse cx="707.800" cy="455" rx="34.200" ry="19.300" fill="#f0a048"/><ellipse cx="707.800" cy="510.500" rx="34.600" ry="22" fill="#f0a048"/><path d="M690 450q-3 8 8 12M724 449q4 8-8 13" stroke="#fff" stroke-width="1.500" fill="none"/><ellipse cx="707" cy="455" rx="22" ry="11" fill="none" stroke="#e89038" stroke-width="1.500"/><ellipse cx="707" cy="509" rx="26" ry="13" fill="none" stroke="#c07830" stroke-width="1.200" stroke-dasharray="9 5"/><ellipse cx="704" cy="510" rx="13" ry="7" fill="none" stroke="#a08060" stroke-width="1.300" stroke-dasharray="6 5"/><path d="M701 480v12M707 480v12M713 480v12" stroke="#b8a090" stroke-width="2"/><circle cx="713" cy="459" r="1.800" fill="#4040d0"/><text x="712" y="436.500" font-size="12" textLength="14.500" lengthAdjust="spacingAndGlyphs" fill="#3030f0" font-family="Liberation Sans,sans-serif">ZC</text><ellipse cx="707" cy="456.500" rx="34" ry="20.500" fill="#f0a048" fill-opacity=".0"/><polygon points="293,745 309,753 309,771 295,779 280,771 280,752" fill="#b4b8b4"/><path d="M293 745v16M280 752l14 9 15-8M294 761v17" stroke="#d0c8d0" stroke-width=".8" fill="none"/><path d="M279 770V746" stroke="#1040e0" stroke-width="2"/><path d="M276.500 750l2.500-6 2.500 6z" fill="#1040e0"/><path d="M281 771l20 12" stroke="#e02020" stroke-width="2.200"/><path d="M304 785l-7-1 3-5z" fill="#e02020"/><circle cx="279.500" cy="770.500" r="4" fill="#e8e8e8"/><text x="276" y="744" font-size="10" fill="#1050f0" font-family="Liberation Sans,sans-serif">Z</text><text x="303" y="792" font-size="10" fill="#e03030" font-family="Liberation Sans,sans-serif">X</text><path d="M308 752l2-3" stroke="#20a020" stroke-width="1.200"/></svg>
<div class="a " style="left:4px;top:234px;width:33px;height:590px;background:linear-gradient(90deg,#8e8e8e,#a6a6a6 40%,#b6b6b6)"></div>
<div class="a " style="left:37px;top:234px;width:192px;height:589px;background:#ececec;border-left:1px solid #f8f8f8"></div>
<div class="a " style="left:37px;top:822px;width:192px;height:2px;background:#9a9a9a"></div>
<div class="a " style="left:228px;top:234px;width:1px;height:590px;background:#6a6a6a"></div>
<div class="a " style="left:10px;top:252px;width:28px;height:39px;border:1px solid #8a8a8a;border-right:1px solid #9a9a9a;border-radius:5px 0 0 5px;background:linear-gradient(90deg,#e0e0e0,#d2d2d2)"></div>
<svg class="a" style="left:12px;top:258px;" width="24" height="26" viewBox="0 0 24 26"><path d="M2 4l3-2 4 1.500v4.500l-3.500 2-3.500-1.500z" fill="#f0c020"/><path d="M2 4l3-2 4 1.500-3.500 2z" fill="#fff0a0"/><path d="M6 9l3-2 4 1.500v4.500l-3.500 2-3.500-1.500z" fill="#f0c020"/><path d="M6 9l3-2 4 1.500-3.500 2z" fill="#fff0a0"/><path d="M14 18l3-2 4 1.500v4.500l-3.500 2-3.500-1.500z" fill="#f0c020"/><path d="M14 18l3-2 4 1.500-3.500 2z" fill="#fff0a0"/><path d="M6 16v9M6 20h6M16 13h7" stroke="#2030c0" stroke-width="1.400"/></svg>
<div class="a " style="left:10px;top:295px;width:28px;height:38px;border:1px solid #8a8a8a;border-right:1px solid #9a9a9a;border-radius:5px 0 0 5px;background:linear-gradient(90deg,#e0e0e0,#d2d2d2)"></div>
<svg class="a" style="left:12px;top:301px;" width="24" height="26" viewBox="0 0 24 26"><path d="M3 2l8 6-8 6zM21 2l-8 6 8 6z" fill="#1020d0"/><path d="M12 1v24" stroke="#101010" stroke-width="1.400" stroke-dasharray="3 2"/><rect x="2" y="16" width="8" height="8" fill="#f8e820" stroke="#404000"/><path d="M14 24v-9l8 9z" fill="#e01010"/></svg>
<div class="a " style="left:9px;top:334px;width:29px;height:42px;border:1px solid #8a8a8a;border-right:0;border-radius:5px 0 0 5px;background:linear-gradient(90deg,#f2f2f2,#e6e6e6)"></div>
<svg class="a" style="left:12px;top:342px;" width="24" height="26" viewBox="0 0 24 26"><ellipse cx="6" cy="4" rx="4.500" ry="2" fill="#e080d0" stroke="#802080"/><path d="M1.500 4v6q4.500 3 9 0v-6" fill="#d060c0" stroke="#802080"/><path d="M6 14v11M6 20h5M13 9h7" stroke="#2030c0" stroke-width="1.400"/><circle cx="16" cy="20" r="4" fill="none" stroke="#a02090" stroke-width="1.400"/><circle cx="16" cy="20" r="1.500" fill="#a02090"/></svg>
<div class="a " style="left:10px;top:377px;width:28px;height:40px;border:1px solid #8a8a8a;border-right:1px solid #9a9a9a;border-radius:5px 0 0 5px;background:linear-gradient(90deg,#e0e0e0,#d2d2d2)"></div>
<svg class="a" style="left:12px;top:384px;" width="24" height="26" viewBox="0 0 24 26"><path d="M2 6l4-3v19h-4z" fill="#f08020"/><path d="M6 3l3 3v16h-3z" fill="#d06010"/><path d="M9 6l4-3v19h-4z" fill="#30c030"/><path d="M13 3l3 3v16h-3z" fill="#209020"/><path d="M16 6l4-3 3 2v17h-7z" fill="#3090f0"/><path d="M20 3l3 2v17h-3z" fill="#2060c0"/></svg>
<div class="a " style="left:10px;top:432px;width:28px;height:39px;border:1px solid #8a8a8a;border-right:1px solid #9a9a9a;border-radius:5px 0 0 5px;background:linear-gradient(90deg,#e0e0e0,#d2d2d2)"></div>
<svg class="a" style="left:12px;top:438px;" width="24" height="26" viewBox="0 0 24 26"><circle cx="9" cy="16" r="7.500" fill="#2a70e0"/><path d="M7 12h3.500v8h2v1.500h-6v-1.500h2v-6h-1.500zM8 8.500h2.500v2.500h-2.500z" fill="#fff"/><path d="M12 6q6 1 8 7M13 2q9 2 11 10" stroke="#2a70e0" stroke-width="2" fill="none"/></svg>
<div class="a " style="left:10px;top:486px;width:28px;height:39px;border:1px solid #8a8a8a;border-right:1px solid #9a9a9a;border-radius:5px 0 0 5px;background:linear-gradient(90deg,#e0e0e0,#d2d2d2)"></div>
<svg class="a" style="left:12px;top:492px;" width="24" height="26" viewBox="0 0 24 26"><path d="M4 2h11l5 5v17h-16z" fill="#fff" stroke="#3050c0" stroke-width="1.300"/><circle cx="12" cy="15" r="5.500" fill="#2a80e0"/><path d="M8 14q3-4 6-1 1 4-3 6-3-1-3-5z" fill="#30b040"/></svg>
<div class="a " style="left:10px;top:540px;width:28px;height:39px;border:1px solid #8a8a8a;border-right:1px solid #9a9a9a;border-radius:5px 0 0 5px;background:linear-gradient(90deg,#e0e0e0,#d2d2d2)"></div>
<svg class="a" style="left:12px;top:546px;" width="24" height="26" viewBox="0 0 24 26"><circle cx="12" cy="13" r="10" fill="#e8f0ff" stroke="#808898" stroke-width="1.800"/><path d="M12 6v7h6" stroke="#101010" stroke-width="1.800" fill="none"/></svg>
<div class="a " style="left:10px;top:582px;width:28px;height:39px;border:1px solid #8a8a8a;border-right:1px solid #9a9a9a;border-radius:5px 0 0 5px;background:linear-gradient(90deg,#e0e0e0,#d2d2d2)"></div>
<svg class="a" style="left:12px;top:588px;" width="24" height="26" viewBox="0 0 24 26"><path d="M3 5l4-2v19l-4 2z" fill="#fff" stroke="#505050"/><rect x="7" y="3" width="15" height="16" fill="#fff" stroke="#505050"/><circle cx="11" cy="7" r="1.800" fill="#2060e0"/><circle cx="11" cy="11" r="1.800" fill="#30b030"/><circle cx="11" cy="15" r="1.800" fill="#e02020"/><path d="M14 7h6M14 11h6M14 15h6" stroke="#404040"/></svg>
<svg class="a" style="left:12px;top:630px" width="24" height="28" viewBox="0 0 24 28"><defs><linearGradient id="rb" x1="0" y1="0" x2="0" y2="1"><stop offset="0" stop-color="#f01010"/><stop offset=".25" stop-color="#f0e010"/><stop offset=".5" stop-color="#20d020"/><stop offset=".75" stop-color="#10c0e0"/><stop offset="1" stop-color="#2020e0"/></linearGradient></defs></svg>
<div class="a " style="left:10px;top:624px;width:28px;height:39px;border:1px solid #8a8a8a;border-right:1px solid #9a9a9a;border-radius:5px 0 0 5px;background:linear-gradient(90deg,#e0e0e0,#d2d2d2)"></div>
<svg class="a" style="left:12px;top:630px;" width="24" height="26" viewBox="0 0 24 26"><rect x="2" y="3" width="8" height="21" fill="url(#rb)"/><path d="M11 7l9 17" stroke="#101010" stroke-width="2.600"/><path d="M9 4l3 5" stroke="#fff" stroke-width="2.400"/></svg>
<div class="a " style="left:10px;top:666px;width:28px;height:39px;border:1px solid #8a8a8a;border-right:1px solid #9a9a9a;border-radius:5px 0 0 5px;background:linear-gradient(90deg,#e0e0e0,#d2d2d2)"></div>
<svg class="a" style="left:12px;top:672px;" width="24" height="26" viewBox="0 0 24 26"><path d="M4 2l5 0 0 16-5 3z" fill="#3a80e0"/><path d="M2 21h10M6 18l-3 6M7 18l3 6" stroke="#e8c020" stroke-width="1.500"/><path d="M8 9l14-3-7 10z" fill="none" stroke="#2050d0" stroke-width="1.600"/><path d="M11 7l9 17" stroke="#101010" stroke-width="2.600"/><path d="M9 4l3 5" stroke="#fff" stroke-width="2.400"/></svg>
<div class="a " style="left:10px;top:708px;width:28px;height:39px;border:1px solid #8a8a8a;border-right:1px solid #9a9a9a;border-radius:5px 0 0 5px;background:linear-gradient(90deg,#e0e0e0,#d2d2d2)"></div>
<svg class="a" style="left:12px;top:714px;" width="24" height="26" viewBox="0 0 24 26"><circle cx="7" cy="12" r="4.500" fill="#806040"/><circle cx="7" cy="13" r="3" fill="#f0c8a0"/><path d="M1 24q0-7 6-7t6 7z" fill="#9050c0"/><circle cx="16" cy="7" r="4.500" fill="#e0a040"/><circle cx="16" cy="8" r="3" fill="#f0c8a0"/><path d="M10 19q0-7 6-7t6 7z" fill="#209040"/></svg>
<div class="a " style="left:10px;top:751px;width:28px;height:38px;border:1px solid #8a8a8a;border-right:1px solid #9a9a9a;border-radius:5px 0 0 5px;background:linear-gradient(90deg,#e0e0e0,#d2d2d2)"></div>
<svg class="a" style="left:12px;top:757px;" width="24" height="26" viewBox="0 0 24 26"><path d="M3 5l4-2v19l-4 2z" fill="#fff" stroke="#505050"/><rect x="7" y="3" width="15" height="17" fill="#fff" stroke="#505050"/><rect x="9" y="5" width="11" height="9" fill="#e02020"/><rect x="11" y="7" width="7" height="5" fill="#a0c8ff"/><rect x="10" y="14" width="9" height="3" fill="#f0a020"/></svg>
<svg class="a" style="left:51px;top:244px;" width="14" height="12" viewBox="0 0 14 12"><ellipse cx="7" cy="5" rx="5" ry="3.800" transform="rotate(-25 7 5)" fill="#e8e040" stroke="#101010" stroke-width="1.500"/><path d="M3 8l-2 3" stroke="#101010" stroke-width="1.800"/><circle cx="8.500" cy="4.500" r="1.500" fill="#101010"/></svg>
<div class="a t" style="left:76px;top:243px;font-size:13px;line-height:15px;color:#000;font-weight:bold">部件导航器</div>
<div class="a " style="left:46px;top:265px;width:172px;height:541px;border:1px solid #6e6e6e;background:#fff"></div>
<div class="a " style="left:47px;top:266px;width:153px;height:17px;background:linear-gradient(#fafafa,#e6e6e6 60%,#cfcfcf);border-bottom:1px solid #aaa"></div>
<div class="a " style="left:200px;top:266px;width:17px;height:17px;background:#a4a4a4"></div>
<div class="a t" style="left:54px;top:267px;font-size:12px;line-height:14px;color:#000;">名称</div>
<div class="a" style="left:92px;top:272px;width:0;height:0;border-left:5.500px solid transparent;border-right:5.500px solid transparent;border-bottom:5px solid #202020"></div>
<div class="a " style="left:47px;top:283px;width:153px;height:20px;background:#ffffff;border-bottom:1px dotted #c8c8c8"></div>
<div class="a " style="left:53px;top:287px;width:9px;height:9px;border:1px solid #909090;background:#fff;border-radius:2px"></div>
<div class="a " style="left:55px;top:291px;width:5px;height:1px;background:#404040"></div>
<div class="a " style="left:63px;top:292px;width:4px;height:1px;border-top:1px dotted #909090"></div>
<svg class="a" style="left:66px;top:285px;" width="18" height="16" viewBox="0 0 18 16"><path d="M1 3l2-2h5l2 2h5v3h-14z" fill="#e8b830" stroke="#a07810" stroke-width=".8"/><path d="M1 15v-12" stroke="#a07810"/><path d="M1 15l3-8h13l-3 8z" fill="#fcd860" stroke="#a07810" stroke-width=".9"/></svg>
<div class="a t" style="left:86px;top:286px;font-size:12px;line-height:14px;color:#000;">模型历史记录</div>
<div class="a " style="left:47px;top:303px;width:153px;height:20px;background:#f6f6f6;border-bottom:1px dotted #c8c8c8"></div>
<div class="a " style="left:79px;top:313px;width:8px;height:1px;border-top:1px dotted #909090"></div>
<div class="a " style="left:88px;top:307px;width:12px;height:12px;border:1.500px solid #101010;background:#fff"></div>
<svg class="a" style="left:88px;top:307px;" width="12" height="12" viewBox="0 0 12 12"><path d="M2.500 6l2.800 3.500 4.500-7.500" stroke="#18b018" stroke-width="2.800" fill="none"/></svg>
<svg class="a" style="left:101px;top:305px;" width="18" height="18" viewBox="0 0 18 18"><path d="M3 9l4-2v-3l4-1 3 1v4l3 1v4l-7 3-7-3z" fill="#3a78e0"/><path d="M3 9l4 1.500v4.500l-4-2z" fill="#6aa0f0"/><path d="M7 4l4-1 3 1-4 1.500z" fill="#b8d8ff"/><path d="M7 10.500l7-2.500 3 1-7 3z" fill="#a0c8ff"/><path d="M10 1h5M10 5h5M12.500 1v4" stroke="#101010" stroke-width="1.200"/><circle cx="4.500" cy="4.500" r="3.600" fill="#fff" stroke="#e01818" stroke-width="1.600"/><path d="M2 7l5-5" stroke="#e01818" stroke-width="1.600"/></svg>
<div class="a " style="left:118px;top:302px;width:81px;height:21px;background:#3392f2;border:1px dotted #e8a040"></div>
<div class="a t" style="left:121px;top:307px;font-size:12px;line-height:14px;color:#fff;">体</div>
<div class="a t" style="left:141px;top:307px;font-size:12px;line-height:14px;color:#fff;"><span class="nk">(0)</span></div>
<div class="a " style="left:47px;top:323px;width:153px;height:20px;background:#ffffff;border-bottom:1px dotted #c8c8c8"></div>
<div class="a " style="left:79px;top:333px;width:8px;height:1px;border-top:1px dotted #909090"></div>
<div class="a " style="left:88px;top:327px;width:12px;height:12px;border:1.500px solid #101010;background:#fff"></div>
<svg class="a" style="left:88px;top:327px;" width="12" height="12" viewBox="0 0 12 12"><path d="M2.500 6l2.800 3.500 4.500-7.500" stroke="#18b018" stroke-width="2.800" fill="none"/></svg>
<svg class="a" style="left:101px;top:325px;" width="18" height="18" viewBox="0 0 18 18"><path d="M3 9l4-2v-3l4-1 3 1v4l3 1v4l-7 3-7-3z" fill="#3a78e0"/><path d="M3 9l4 1.500v4.500l-4-2z" fill="#6aa0f0"/><path d="M7 4l4-1 3 1-4 1.500z" fill="#b8d8ff"/><path d="M7 10.500l7-2.500 3 1-7 3z" fill="#a0c8ff"/><path d="M10 1h5M10 5h5M12.500 1v4" stroke="#101010" stroke-width="1.200"/><circle cx="4.500" cy="4.500" r="3.600" fill="#fff" stroke="#e01818" stroke-width="1.600"/><path d="M2 7l5-5" stroke="#e01818" stroke-width="1.600"/></svg>
<div class="a t" style="left:121px;top:327px;font-size:12px;line-height:14px;color:#000;">体</div>
<div class="a t" style="left:141px;top:327px;font-size:12px;line-height:14px;color:#000;"><span class="nk">(1)</span></div>
<div class="a " style="left:47px;top:343px;width:153px;height:20px;background:#f6f6f6;border-bottom:1px dotted #c8c8c8"></div>
<div class="a " style="left:79px;top:353px;width:8px;height:1px;border-top:1px dotted #909090"></div>
<div class="a " style="left:88px;top:347px;width:12px;height:12px;border:1.500px solid #101010;background:#fff"></div>
<svg class="a" style="left:88px;top:347px;" width="12" height="12" viewBox="0 0 12 12"><path d="M2.500 6l2.800 3.500 4.500-7.500" stroke="#18b018" stroke-width="2.800" fill="none"/></svg>
<svg class="a" style="left:101px;top:345px;" width="18" height="18" viewBox="0 0 18 18"><path d="M3 9l4-2v-3l4-1 3 1v4l3 1v4l-7 3-7-3z" fill="#3a78e0"/><path d="M3 9l4 1.500v4.500l-4-2z" fill="#6aa0f0"/><path d="M7 4l4-1 3 1-4 1.500z" fill="#b8d8ff"/><path d="M7 10.500l7-2.500 3 1-7 3z" fill="#a0c8ff"/><path d="M10 1h5M10 5h5M12.500 1v4" stroke="#101010" stroke-width="1.200"/><circle cx="4.500" cy="4.500" r="3.600" fill="#fff" stroke="#e01818" stroke-width="1.600"/><path d="M2 7l5-5" stroke="#e01818" stroke-width="1.600"/></svg>
<div class="a t" style="left:121px;top:347px;font-size:12px;line-height:14px;color:#000;">体</div>
<div class="a t" style="left:141px;top:347px;font-size:12px;line-height:14px;color:#000;"><span class="nk">(2)</span></div>
<div class="a " style="left:47px;top:363px;width:153px;height:20px;background:#ffffff;border-bottom:1px dotted #c8c8c8"></div>
<div class="a " style="left:79px;top:373px;width:8px;height:1px;border-top:1px dotted #909090"></div>
<div class="a " style="left:88px;top:367px;width:12px;height:12px;border:1.500px solid #101010;background:#fff"></div>
<svg class="a" style="left:88px;top:367px;" width="12" height="12" viewBox="0 0 12 12"><path d="M2.500 6l2.800 3.500 4.500-7.500" stroke="#18b018" stroke-width="2.800" fill="none"/></svg>
<svg class="a" style="left:101px;top:365px;" width="18" height="18" viewBox="0 0 18 18"><path d="M3 9l4-2v-3l4-1 3 1v4l3 1v4l-7 3-7-3z" fill="#3a78e0"/><path d="M3 9l4 1.500v4.500l-4-2z" fill="#6aa0f0"/><path d="M7 4l4-1 3 1-4 1.500z" fill="#b8d8ff"/><path d="M7 10.500l7-2.500 3 1-7 3z" fill="#a0c8ff"/><path d="M10 1h5M10 5h5M12.500 1v4" stroke="#101010" stroke-width="1.200"/><circle cx="4.500" cy="4.500" r="3.600" fill="#fff" stroke="#e01818" stroke-width="1.600"/><path d="M2 7l5-5" stroke="#e01818" stroke-width="1.600"/></svg>
<div class="a t" style="left:121px;top:367px;font-size:12px;line-height:14px;color:#000;">体</div>
<div class="a t" style="left:141px;top:367px;font-size:12px;line-height:14px;color:#000;"><span class="nk">(3)</span></div>
<div class="a " style="left:47px;top:383px;width:153px;height:20px;background:#f6f6f6;border-bottom:1px dotted #c8c8c8"></div>
<div class="a " style="left:79px;top:393px;width:8px;height:1px;border-top:1px dotted #909090"></div>
<div class="a " style="left:88px;top:387px;width:12px;height:12px;border:1.500px solid #101010;background:#fff"></div>
<svg class="a" style="left:88px;top:387px;" width="12" height="12" viewBox="0 0 12 12"><path d="M2.500 6l2.800 3.500 4.500-7.500" stroke="#18b018" stroke-width="2.800" fill="none"/></svg>
<svg class="a" style="left:101px;top:385px;" width="18" height="18" viewBox="0 0 18 18"><path d="M3 9l4-2v-3l4-1 3 1v4l3 1v4l-7 3-7-3z" fill="#3a78e0"/><path d="M3 9l4 1.500v4.500l-4-2z" fill="#6aa0f0"/><path d="M7 4l4-1 3 1-4 1.500z" fill="#b8d8ff"/><path d="M7 10.500l7-2.500 3 1-7 3z" fill="#a0c8ff"/><path d="M10 1h5M10 5h5M12.500 1v4" stroke="#101010" stroke-width="1.200"/><circle cx="4.500" cy="4.500" r="3.600" fill="#fff" stroke="#e01818" stroke-width="1.600"/><path d="M2 7l5-5" stroke="#e01818" stroke-width="1.600"/></svg>
<div class="a t" style="left:121px;top:387px;font-size:12px;line-height:14px;color:#000;">体</div>
<div class="a t" style="left:141px;top:387px;font-size:12px;line-height:14px;color:#000;"><span class="nk">(4)</span></div>
<div class="a " style="left:47px;top:403px;width:153px;height:20px;background:#ffffff;border-bottom:1px dotted #c8c8c8"></div>
<div class="a " style="left:79px;top:413px;width:8px;height:1px;border-top:1px dotted #909090"></div>
<div class="a " style="left:88px;top:407px;width:12px;height:12px;border:1.500px solid #101010;background:#fff"></div>
<svg class="a" style="left:88px;top:407px;" width="12" height="12" viewBox="0 0 12 12"><path d="M2.500 6l2.800 3.500 4.500-7.500" stroke="#18b018" stroke-width="2.800" fill="none"/></svg>
<svg class="a" style="left:101px;top:405px;" width="18" height="18" viewBox="0 0 18 18"><path d="M3 9l4-2v-3l4-1 3 1v4l3 1v4l-7 3-7-3z" fill="#3a78e0"/><path d="M3 9l4 1.500v4.500l-4-2z" fill="#6aa0f0"/><path d="M7 4l4-1 3 1-4 1.500z" fill="#b8d8ff"/><path d="M7 10.500l7-2.500 3 1-7 3z" fill="#a0c8ff"/><path d="M10 1h5M10 5h5M12.500 1v4" stroke="#101010" stroke-width="1.200"/><circle cx="4.500" cy="4.500" r="3.600" fill="#fff" stroke="#e01818" stroke-width="1.600"/><path d="M2 7l5-5" stroke="#e01818" stroke-width="1.600"/></svg>
<div class="a t" style="left:121px;top:407px;font-size:12px;line-height:14px;color:#000;">体</div>
<div class="a t" style="left:141px;top:407px;font-size:12px;line-height:14px;color:#000;"><span class="nk">(5)</span></div>
<div class="a " style="left:47px;top:423px;width:153px;height:20px;background:#f6f6f6;border-bottom:1px dotted #c8c8c8"></div>
<div class="a " style="left:79px;top:433px;width:8px;height:1px;border-top:1px dotted #909090"></div>
<div class="a " style="left:88px;top:427px;width:12px;height:12px;border:1.500px solid #101010;background:#fff"></div>
<svg class="a" style="left:88px;top:427px;" width="12" height="12" viewBox="0 0 12 12"><path d="M2.500 6l2.800 3.500 4.500-7.500" stroke="#18b018" stroke-width="2.800" fill="none"/></svg>
<svg class="a" style="left:101px;top:425px;" width="18" height="18" viewBox="0 0 18 18"><path d="M3 9l4-2v-3l4-1 3 1v4l3 1v4l-7 3-7-3z" fill="#3a78e0"/><path d="M3 9l4 1.500v4.500l-4-2z" fill="#6aa0f0"/><path d="M7 4l4-1 3 1-4 1.500z" fill="#b8d8ff"/><path d="M7 10.500l7-2.500 3 1-7 3z" fill="#a0c8ff"/><path d="M10 1h5M10 5h5M12.500 1v4" stroke="#101010" stroke-width="1.200"/><circle cx="4.500" cy="4.500" r="3.600" fill="#fff" stroke="#e01818" stroke-width="1.600"/><path d="M2 7l5-5" stroke="#e01818" stroke-width="1.600"/></svg>
<div class="a t" style="left:121px;top:427px;font-size:12px;line-height:14px;color:#000;">体</div>
<div class="a t" style="left:141px;top:427px;font-size:12px;line-height:14px;color:#000;"><span class="nk">(6)</span></div>
<div class="a " style="left:47px;top:443px;width:153px;height:20px;background:#ffffff;border-bottom:1px dotted #c8c8c8"></div>
<div class="a " style="left:79px;top:453px;width:8px;height:1px;border-top:1px dotted #909090"></div>
<div class="a " style="left:88px;top:447px;width:12px;height:12px;border:1.500px solid #101010;background:#fff"></div>
<svg class="a" style="left:88px;top:447px;" width="12" height="12" viewBox="0 0 12 12"><path d="M2.500 6l2.800 3.500 4.500-7.500" stroke="#18b018" stroke-width="2.800" fill="none"/></svg>
<svg class="a" style="left:101px;top:445px;" width="18" height="18" viewBox="0 0 18 18"><path d="M3 9l4-2v-3l4-1 3 1v4l3 1v4l-7 3-7-3z" fill="#3a78e0"/><path d="M3 9l4 1.500v4.500l-4-2z" fill="#6aa0f0"/><path d="M7 4l4-1 3 1-4 1.500z" fill="#b8d8ff"/><path d="M7 10.500l7-2.500 3 1-7 3z" fill="#a0c8ff"/><path d="M10 1h5M10 5h5M12.500 1v4" stroke="#101010" stroke-width="1.200"/><circle cx="4.500" cy="4.500" r="3.600" fill="#fff" stroke="#e01818" stroke-width="1.600"/><path d="M2 7l5-5" stroke="#e01818" stroke-width="1.600"/></svg>
<div class="a t" style="left:121px;top:447px;font-size:12px;line-height:14px;color:#000;">体</div>
<div class="a t" style="left:141px;top:447px;font-size:12px;line-height:14px;color:#000;"><span class="nk">(7)</span></div>
<div class="a " style="left:47px;top:463px;width:153px;height:20px;background:#f6f6f6;border-bottom:1px dotted #c8c8c8"></div>
<div class="a " style="left:79px;top:473px;width:8px;height:1px;border-top:1px dotted #909090"></div>
<div class="a " style="left:88px;top:467px;width:12px;height:12px;border:1.500px solid #101010;background:#fff"></div>
<svg class="a" style="left:88px;top:467px;" width="12" height="12" viewBox="0 0 12 12"><path d="M2.500 6l2.800 3.500 4.500-7.500" stroke="#18b018" stroke-width="2.800" fill="none"/></svg>
<svg class="a" style="left:101px;top:465px;" width="18" height="18" viewBox="0 0 18 18"><path d="M3 9l4-2v-3l4-1 3 1v4l3 1v4l-7 3-7-3z" fill="#3a78e0"/><path d="M3 9l4 1.500v4.500l-4-2z" fill="#6aa0f0"/><path d="M7 4l4-1 3 1-4 1.500z" fill="#b8d8ff"/><path d="M7 10.500l7-2.500 3 1-7 3z" fill="#a0c8ff"/><path d="M10 1h5M10 5h5M12.500 1v4" stroke="#101010" stroke-width="1.200"/><circle cx="4.500" cy="4.500" r="3.600" fill="#fff" stroke="#e01818" stroke-width="1.600"/><path d="M2 7l5-5" stroke="#e01818" stroke-width="1.600"/></svg>
<div class="a t" style="left:121px;top:467px;font-size:12px;line-height:14px;color:#000;">体</div>
<div class="a t" style="left:141px;top:467px;font-size:12px;line-height:14px;color:#000;"><span class="nk">(8)</span></div>
<div class="a " style="left:47px;top:483px;width:153px;height:20px;background:#ffffff;border-bottom:1px dotted #c8c8c8"></div>
<div class="a " style="left:79px;top:493px;width:8px;height:1px;border-top:1px dotted #909090"></div>
<div class="a " style="left:88px;top:487px;width:12px;height:12px;border:1.500px solid #101010;background:#fff"></div>
<svg class="a" style="left:88px;top:487px;" width="12" height="12" viewBox="0 0 12 12"><path d="M2.500 6l2.800 3.500 4.500-7.500" stroke="#18b018" stroke-width="2.800" fill="none"/></svg>
<svg class="a" style="left:101px;top:485px;" width="18" height="18" viewBox="0 0 18 18"><path d="M3 9l4-2v-3l4-1 3 1v4l3 1v4l-7 3-7-3z" fill="#3a78e0"/><path d="M3 9l4 1.500v4.500l-4-2z" fill="#6aa0f0"/><path d="M7 4l4-1 3 1-4 1.500z" fill="#b8d8ff"/><path d="M7 10.500l7-2.500 3 1-7 3z" fill="#a0c8ff"/><path d="M10 1h5M10 5h5M12.500 1v4" stroke="#101010" stroke-width="1.200"/><circle cx="4.500" cy="4.500" r="3.600" fill="#fff" stroke="#e01818" stroke-width="1.600"/><path d="M2 7l5-5" stroke="#e01818" stroke-width="1.600"/></svg>
<div class="a t" style="left:121px;top:487px;font-size:12px;line-height:14px;color:#000;">体</div>
<div class="a t" style="left:141px;top:487px;font-size:12px;line-height:14px;color:#000;"><span class="nk">(9)</span></div>
<div class="a " style="left:47px;top:503px;width:153px;height:20px;background:#f6f6f6;border-bottom:1px dotted #c8c8c8"></div>
<div class="a " style="left:79px;top:513px;width:8px;height:1px;border-top:1px dotted #909090"></div>
<div class="a " style="left:88px;top:507px;width:12px;height:12px;border:1.500px solid #101010;background:#fff"></div>
<svg class="a" style="left:88px;top:507px;" width="12" height="12" viewBox="0 0 12 12"><path d="M2.500 6l2.800 3.500 4.500-7.500" stroke="#18b018" stroke-width="2.800" fill="none"/></svg>
<svg class="a" style="left:101px;top:505px;" width="18" height="18" viewBox="0 0 18 18"><path d="M3 9l4-2v-3l4-1 3 1v4l3 1v4l-7 3-7-3z" fill="#3a78e0"/><path d="M3 9l4 1.500v4.500l-4-2z" fill="#6aa0f0"/><path d="M7 4l4-1 3 1-4 1.500z" fill="#b8d8ff"/><path d="M7 10.500l7-2.500 3 1-7 3z" fill="#a0c8ff"/><path d="M10 1h5M10 5h5M12.500 1v4" stroke="#101010" stroke-width="1.200"/><circle cx="4.500" cy="4.500" r="3.600" fill="#fff" stroke="#e01818" stroke-width="1.600"/><path d="M2 7l5-5" stroke="#e01818" stroke-width="1.600"/></svg>
<div class="a t" style="left:121px;top:507px;font-size:12px;line-height:14px;color:#000;">体</div>
<div class="a t" style="left:141px;top:507px;font-size:12px;line-height:14px;color:#000;"><span class="nk">(10)</span></div>
<div class="a " style="left:47px;top:523px;width:153px;height:20px;background:#ffffff;border-bottom:1px dotted #c8c8c8"></div>
<div class="a " style="left:79px;top:533px;width:8px;height:1px;border-top:1px dotted #909090"></div>
<div class="a " style="left:88px;top:527px;width:12px;height:12px;border:1.500px solid #101010;background:#fff"></div>
<svg class="a" style="left:88px;top:527px;" width="12" height="12" viewBox="0 0 12 12"><path d="M2.500 6l2.800 3.500 4.500-7.500" stroke="#18b018" stroke-width="2.800" fill="none"/></svg>
<svg class="a" style="left:101px;top:525px;" width="18" height="18" viewBox="0 0 18 18"><path d="M3 9l4-2v-3l4-1 3 1v4l3 1v4l-7 3-7-3z" fill="#3a78e0"/><path d="M3 9l4 1.500v4.500l-4-2z" fill="#6aa0f0"/><path d="M7 4l4-1 3 1-4 1.500z" fill="#b8d8ff"/><path d="M7 10.500l7-2.500 3 1-7 3z" fill="#a0c8ff"/><path d="M10 1h5M10 5h5M12.500 1v4" stroke="#101010" stroke-width="1.200"/><circle cx="4.500" cy="4.500" r="3.600" fill="#fff" stroke="#e01818" stroke-width="1.600"/><path d="M2 7l5-5" stroke="#e01818" stroke-width="1.600"/></svg>
<div class="a t" style="left:121px;top:527px;font-size:12px;line-height:14px;color:#000;">体</div>
<div class="a t" style="left:141px;top:527px;font-size:12px;line-height:14px;color:#000;"><span class="nk">(11)</span></div>
<div class="a " style="left:47px;top:543px;width:153px;height:20px;background:#f6f6f6;border-bottom:1px dotted #c8c8c8"></div>
<div class="a " style="left:79px;top:553px;width:8px;height:1px;border-top:1px dotted #909090"></div>
<div class="a " style="left:88px;top:547px;width:12px;height:12px;border:1.500px solid #101010;background:#fff"></div>
<svg class="a" style="left:88px;top:547px;" width="12" height="12" viewBox="0 0 12 12"><path d="M2.500 6l2.800 3.500 4.500-7.500" stroke="#18b018" stroke-width="2.800" fill="none"/></svg>
<svg class="a" style="left:101px;top:545px;" width="18" height="18" viewBox="0 0 18 18"><path d="M3 9l4-2v-3l4-1 3 1v4l3 1v4l-7 3-7-3z" fill="#3a78e0"/><path d="M3 9l4 1.500v4.500l-4-2z" fill="#6aa0f0"/><path d="M7 4l4-1 3 1-4 1.500z" fill="#b8d8ff"/><path d="M7 10.500l7-2.500 3 1-7 3z" fill="#a0c8ff"/><path d="M10 1h5M10 5h5M12.500 1v4" stroke="#101010" stroke-width="1.200"/><circle cx="4.500" cy="4.500" r="3.600" fill="#fff" stroke="#e01818" stroke-width="1.600"/><path d="M2 7l5-5" stroke="#e01818" stroke-width="1.600"/></svg>
<div class="a t" style="left:121px;top:547px;font-size:12px;line-height:14px;color:#000;">体</div>
<div class="a t" style="left:141px;top:547px;font-size:12px;line-height:14px;color:#000;"><span class="nk">(12)</span></div>
<div class="a " style="left:47px;top:563px;width:153px;height:20px;background:#ffffff;border-bottom:1px dotted #c8c8c8"></div>
<div class="a " style="left:79px;top:573px;width:8px;height:1px;border-top:1px dotted #909090"></div>
<div class="a " style="left:88px;top:567px;width:12px;height:12px;border:1.500px solid #101010;background:#fff"></div>
<svg class="a" style="left:88px;top:567px;" width="12" height="12" viewBox="0 0 12 12"><path d="M2.500 6l2.800 3.500 4.500-7.500" stroke="#18b018" stroke-width="2.800" fill="none"/></svg>
<svg class="a" style="left:101px;top:565px;" width="18" height="18" viewBox="0 0 18 18"><path d="M3 9l4-2v-3l4-1 3 1v4l3 1v4l-7 3-7-3z" fill="#3a78e0"/><path d="M3 9l4 1.500v4.500l-4-2z" fill="#6aa0f0"/><path d="M7 4l4-1 3 1-4 1.500z" fill="#b8d8ff"/><path d="M7 10.500l7-2.500 3 1-7 3z" fill="#a0c8ff"/><path d="M10 1h5M10 5h5M12.500 1v4" stroke="#101010" stroke-width="1.200"/><circle cx="4.500" cy="4.500" r="3.600" fill="#fff" stroke="#e01818" stroke-width="1.600"/><path d="M2 7l5-5" stroke="#e01818" stroke-width="1.600"/></svg>
<div class="a t" style="left:121px;top:567px;font-size:12px;line-height:14px;color:#000;">体</div>
<div class="a t" style="left:141px;top:567px;font-size:12px;line-height:14px;color:#000;"><span class="nk">(13)</span></div>
<div class="a " style="left:47px;top:583px;width:153px;height:20px;background:#f6f6f6;border-bottom:1px dotted #c8c8c8"></div>
<div class="a " style="left:79px;top:593px;width:8px;height:1px;border-top:1px dotted #909090"></div>
<div class="a " style="left:88px;top:587px;width:12px;height:12px;border:1.500px solid #101010;background:#fff"></div>
<svg class="a" style="left:88px;top:587px;" width="12" height="12" viewBox="0 0 12 12"><path d="M2.500 6l2.800 3.500 4.500-7.500" stroke="#18b018" stroke-width="2.800" fill="none"/></svg>
<svg class="a" style="left:101px;top:585px;" width="18" height="18" viewBox="0 0 18 18"><path d="M3 9l4-2v-3l4-1 3 1v4l3 1v4l-7 3-7-3z" fill="#3a78e0"/><path d="M3 9l4 1.500v4.500l-4-2z" fill="#6aa0f0"/><path d="M7 4l4-1 3 1-4 1.500z" fill="#b8d8ff"/><path d="M7 10.500l7-2.500 3 1-7 3z" fill="#a0c8ff"/><path d="M10 1h5M10 5h5M12.500 1v4" stroke="#101010" stroke-width="1.200"/><circle cx="4.500" cy="4.500" r="3.600" fill="#fff" stroke="#e01818" stroke-width="1.600"/><path d="M2 7l5-5" stroke="#e01818" stroke-width="1.600"/></svg>
<div class="a t" style="left:121px;top:587px;font-size:12px;line-height:14px;color:#000;">体</div>
<div class="a t" style="left:141px;top:587px;font-size:12px;line-height:14px;color:#000;"><span class="nk">(14)</span></div>
<div class="a " style="left:47px;top:603px;width:153px;height:20px;background:#ffffff;border-bottom:1px dotted #c8c8c8"></div>
<div class="a " style="left:79px;top:613px;width:8px;height:1px;border-top:1px dotted #909090"></div>
<div class="a " style="left:88px;top:607px;width:12px;height:12px;border:1.500px solid #101010;background:#fff"></div>
<svg class="a" style="left:88px;top:607px;" width="12" height="12" viewBox="0 0 12 12"><path d="M2.500 6l2.800 3.500 4.500-7.500" stroke="#18b018" stroke-width="2.800" fill="none"/></svg>
<svg class="a" style="left:101px;top:605px;" width="18" height="18" viewBox="0 0 18 18"><path d="M3 9l4-2v-3l4-1 3 1v4l3 1v4l-7 3-7-3z" fill="#3a78e0"/><path d="M3 9l4 1.500v4.500l-4-2z" fill="#6aa0f0"/><path d="M7 4l4-1 3 1-4 1.500z" fill="#b8d8ff"/><path d="M7 10.500l7-2.500 3 1-7 3z" fill="#a0c8ff"/><path d="M10 1h5M10 5h5M12.500 1v4" stroke="#101010" stroke-width="1.200"/><circle cx="4.500" cy="4.500" r="3.600" fill="#fff" stroke="#e01818" stroke-width="1.600"/><path d="M2 7l5-5" stroke="#e01818" stroke-width="1.600"/></svg>
<div class="a t" style="left:121px;top:607px;font-size:12px;line-height:14px;color:#000;">体</div>
<div class="a t" style="left:141px;top:607px;font-size:12px;line-height:14px;color:#000;"><span class="nk">(15)</span></div>
<div class="a " style="left:47px;top:623px;width:153px;height:20px;background:#f6f6f6;border-bottom:1px dotted #c8c8c8"></div>
<div class="a " style="left:79px;top:633px;width:8px;height:1px;border-top:1px dotted #909090"></div>
<div class="a " style="left:88px;top:627px;width:12px;height:12px;border:1.500px solid #101010;background:#fff"></div>
<svg class="a" style="left:88px;top:627px;" width="12" height="12" viewBox="0 0 12 12"><path d="M2.500 6l2.800 3.500 4.500-7.500" stroke="#18b018" stroke-width="2.800" fill="none"/></svg>
<svg class="a" style="left:101px;top:625px;" width="18" height="18" viewBox="0 0 18 18"><path d="M3 9l4-2v-3l4-1 3 1v4l3 1v4l-7 3-7-3z" fill="#3a78e0"/><path d="M3 9l4 1.500v4.500l-4-2z" fill="#6aa0f0"/><path d="M7 4l4-1 3 1-4 1.500z" fill="#b8d8ff"/><path d="M7 10.500l7-2.500 3 1-7 3z" fill="#a0c8ff"/><path d="M10 1h5M10 5h5M12.500 1v4" stroke="#101010" stroke-width="1.200"/><circle cx="4.500" cy="4.500" r="3.600" fill="#fff" stroke="#e01818" stroke-width="1.600"/><path d="M2 7l5-5" stroke="#e01818" stroke-width="1.600"/></svg>
<div class="a t" style="left:121px;top:627px;font-size:12px;line-height:14px;color:#000;">体</div>
<div class="a t" style="left:141px;top:627px;font-size:12px;line-height:14px;color:#000;"><span class="nk">(16)</span></div>
<div class="a " style="left:47px;top:643px;width:153px;height:20px;background:#ffffff;border-bottom:1px dotted #c8c8c8"></div>
<div class="a " style="left:79px;top:653px;width:8px;height:1px;border-top:1px dotted #909090"></div>
<div class="a " style="left:88px;top:647px;width:12px;height:12px;border:1.500px solid #101010;background:#fff"></div>
<svg class="a" style="left:88px;top:647px;" width="12" height="12" viewBox="0 0 12 12"><path d="M2.500 6l2.800 3.500 4.500-7.500" stroke="#18b018" stroke-width="2.800" fill="none"/></svg>
<svg class="a" style="left:101px;top:645px;" width="18" height="18" viewBox="0 0 18 18"><path d="M3 9l4-2v-3l4-1 3 1v4l3 1v4l-7 3-7-3z" fill="#3a78e0"/><path d="M3 9l4 1.500v4.500l-4-2z" fill="#6aa0f0"/><path d="M7 4l4-1 3 1-4 1.500z" fill="#b8d8ff"/><path d="M7 10.500l7-2.500 3 1-7 3z" fill="#a0c8ff"/><path d="M10 1h5M10 5h5M12.500 1v4" stroke="#101010" stroke-width="1.200"/><circle cx="4.500" cy="4.500" r="3.600" fill="#fff" stroke="#e01818" stroke-width="1.600"/><path d="M2 7l5-5" stroke="#e01818" stroke-width="1.600"/></svg>
<div class="a t" style="left:121px;top:647px;font-size:12px;line-height:14px;color:#000;">体</div>
<div class="a t" style="left:141px;top:647px;font-size:12px;line-height:14px;color:#000;"><span class="nk">(17)</span></div>
<div class="a " style="left:47px;top:663px;width:153px;height:20px;background:#f6f6f6;border-bottom:1px dotted #c8c8c8"></div>
<div class="a " style="left:79px;top:673px;width:8px;height:1px;border-top:1px dotted #909090"></div>
<div class="a " style="left:88px;top:667px;width:12px;height:12px;border:1.500px solid #101010;background:#fff"></div>
<svg class="a" style="left:88px;top:667px;" width="12" height="12" viewBox="0 0 12 12"><path d="M2.500 6l2.800 3.500 4.500-7.500" stroke="#18b018" stroke-width="2.800" fill="none"/></svg>
<svg class="a" style="left:101px;top:665px;" width="18" height="18" viewBox="0 0 18 18"><path d="M3 9l4-2v-3l4-1 3 1v4l3 1v4l-7 3-7-3z" fill="#3a78e0"/><path d="M3 9l4 1.500v4.500l-4-2z" fill="#6aa0f0"/><path d="M7 4l4-1 3 1-4 1.500z" fill="#b8d8ff"/><path d="M7 10.500l7-2.500 3 1-7 3z" fill="#a0c8ff"/><path d="M10 1h5M10 5h5M12.500 1v4" stroke="#101010" stroke-width="1.200"/><circle cx="4.500" cy="4.500" r="3.600" fill="#fff" stroke="#e01818" stroke-width="1.600"/><path d="M2 7l5-5" stroke="#e01818" stroke-width="1.600"/></svg>
<div class="a t" style="left:121px;top:667px;font-size:12px;line-height:14px;color:#000;">体</div>
<div class="a t" style="left:141px;top:667px;font-size:12px;line-height:14px;color:#000;"><span class="nk">(18)</span></div>
<div class="a " style="left:47px;top:683px;width:153px;height:20px;background:#ffffff;border-bottom:1px dotted #c8c8c8"></div>
<div class="a " style="left:79px;top:693px;width:8px;height:1px;border-top:1px dotted #909090"></div>
<div class="a " style="left:88px;top:687px;width:12px;height:12px;border:1.500px solid #101010;background:#fff"></div>
<svg class="a" style="left:88px;top:687px;" width="12" height="12" viewBox="0 0 12 12"><path d="M2.500 6l2.800 3.500 4.500-7.500" stroke="#18b018" stroke-width="2.800" fill="none"/></svg>
<svg class="a" style="left:102px;top:684px;" width="16" height="18" viewBox="0 0 16 18"><path d="M1 5l6-3 8 2v8l-7 4-7-3z" fill="#5a88e8"/><path d="M1 5l6-3 8 2-7 3z" fill="#c0d8ff"/><path d="M8 7l7-3v8l-7 4z" fill="#3a60c8"/><path d="M1 5l7 2v9l-7-3z" fill="#7aa8f8"/></svg>
<div class="a t" style="left:121px;top:687px;font-size:12px;line-height:14px;color:#000;">块</div>
<div class="a t" style="left:141px;top:687px;font-size:12px;line-height:14px;color:#000;"><span class="nk">(19)</span></div>
<div class="a " style="left:47px;top:703px;width:153px;height:20px;background:#f6f6f6;border-bottom:1px dotted #c8c8c8"></div>
<div class="a " style="left:79px;top:713px;width:8px;height:1px;border-top:1px dotted #909090"></div>
<div class="a " style="left:88px;top:707px;width:12px;height:12px;border:1.500px solid #101010;background:#fff"></div>
<svg class="a" style="left:88px;top:707px;" width="12" height="12" viewBox="0 0 12 12"><path d="M2.500 6l2.800 3.500 4.500-7.500" stroke="#18b018" stroke-width="2.800" fill="none"/></svg>
<svg class="a" style="left:102px;top:704px;" width="16" height="18" viewBox="0 0 16 18"><path d="M1 5l6-3 8 2v8l-7 4-7-3z" fill="#5a88e8"/><path d="M1 5l6-3 8 2-7 3z" fill="#c0d8ff"/><path d="M8 7l7-3v8l-7 4z" fill="#3a60c8"/><path d="M1 5l7 2v9l-7-3z" fill="#7aa8f8"/></svg>
<div class="a t" style="left:121px;top:707px;font-size:12px;line-height:14px;color:#000;">块</div>
<div class="a t" style="left:141px;top:707px;font-size:12px;line-height:14px;color:#000;"><span class="nk">(20)</span></div>
<div class="a " style="left:47px;top:723px;width:153px;height:20px;background:#ffffff;border-bottom:1px dotted #c8c8c8"></div>
<div class="a " style="left:79px;top:733px;width:8px;height:1px;border-top:1px dotted #909090"></div>
<div class="a " style="left:88px;top:727px;width:12px;height:12px;border:1.500px solid #101010;background:#fff"></div>
<svg class="a" style="left:88px;top:727px;" width="12" height="12" viewBox="0 0 12 12"><path d="M2.500 6l2.800 3.500 4.500-7.500" stroke="#18b018" stroke-width="2.800" fill="none"/></svg>
<svg class="a" style="left:102px;top:724px;" width="16" height="18" viewBox="0 0 16 18"><path d="M1 5l6-3 8 2v8l-7 4-7-3z" fill="#5a88e8"/><path d="M1 5l6-3 8 2-7 3z" fill="#c0d8ff"/><path d="M8 7l7-3v8l-7 4z" fill="#3a60c8"/><path d="M1 5l7 2v9l-7-3z" fill="#7aa8f8"/></svg>
<div class="a t" style="left:121px;top:727px;font-size:12px;line-height:14px;color:#000;">块</div>
<div class="a t" style="left:141px;top:727px;font-size:12px;line-height:14px;color:#000;"><span class="nk">(21)</span></div>
<div class="a " style="left:47px;top:743px;width:153px;height:20px;background:#f6f6f6;border-bottom:1px dotted #c8c8c8"></div>
<div class="a " style="left:79px;top:753px;width:8px;height:1px;border-top:1px dotted #909090"></div>
<div class="a " style="left:88px;top:747px;width:12px;height:12px;border:1.500px solid #101010;background:#fff"></div>
<svg class="a" style="left:88px;top:747px;" width="12" height="12" viewBox="0 0 12 12"><path d="M2.500 6l2.800 3.500 4.500-7.500" stroke="#18b018" stroke-width="2.800" fill="none"/></svg>
<svg class="a" style="left:103px;top:744px;" width="16" height="18" viewBox="0 0 16 18"><circle cx="11" cy="6" r="4" fill="#fff" stroke="#101010" stroke-width="1.300"/><rect x="2" y="7" width="9" height="9" fill="#28a088" stroke="#101010" stroke-width="1.300"/><path d="M0 1.500h5" stroke="#e01010" stroke-width="1.500"/></svg>
<div class="a t" style="left:121px;top:747px;font-size:12px;line-height:14px;color:#000;">求差</div>
<div class="a t" style="left:153px;top:747px;font-size:12px;line-height:14px;color:#000;"><span class="nk">(22)</span></div>
<div class="a " style="left:47px;top:763px;width:153px;height:20px;background:#ffffff;border-bottom:1px dotted #c8c8c8"></div>
<div class="a " style="left:79px;top:773px;width:8px;height:1px;border-top:1px dotted #909090"></div>
<div class="a " style="left:88px;top:767px;width:12px;height:12px;border:1.500px solid #101010;background:#fff"></div>
<svg class="a" style="left:88px;top:767px;" width="12" height="12" viewBox="0 0 12 12"><path d="M2.500 6l2.800 3.500 4.500-7.500" stroke="#18b018" stroke-width="2.800" fill="none"/></svg>
<svg class="a" style="left:103px;top:764px;" width="16" height="18" viewBox="0 0 16 18"><circle cx="11" cy="6" r="4" fill="#fff" stroke="#101010" stroke-width="1.300"/><rect x="2" y="7" width="9" height="9" fill="#28a088" stroke="#101010" stroke-width="1.300"/><path d="M0 1.500h5" stroke="#e01010" stroke-width="1.500"/></svg>
<div class="a t" style="left:121px;top:767px;font-size:12px;line-height:14px;color:#000;">求差</div>
<div class="a t" style="left:153px;top:767px;font-size:12px;line-height:14px;color:#000;"><span class="nk">(23)</span></div>
<div class="a " style="left:47px;top:783px;width:153px;height:4px;background:#fff"></div>
<div class="a " style="left:108px;top:785px;width:8px;height:2px;background:#5a80e8;border-radius:1px"></div>
<div class="a " style="left:77px;top:300px;width:1px;height:487px;border-left:1px dotted #909090"></div>
<div class="a " style="left:200px;top:283px;width:17px;height:504px;background:#f2f2f2;border-left:1px solid #e0e0e0"></div>
<div class="a" style="left:204px;top:290px;width:0;height:0;border-left:4px solid transparent;border-right:4px solid transparent;border-bottom:4px solid #404040"></div>
<div class="a" style="left:204px;top:776px;width:0;height:0;border-left:4px solid transparent;border-right:4px solid transparent;border-top:4px solid #404040"></div>
<div class="a " style="left:201px;top:305px;width:15px;height:15px;border:1px solid #8a8a8a;border-radius:2px;background:linear-gradient(90deg,#f8f8f8,#cfcfcf)"></div>
<div class="a " style="left:47px;top:787px;width:170px;height:17px;background:#f0f0f0;border-top:1px solid #e0e0e0"></div>
<div class="a" style="left:53px;top:792px;width:0;height:0;border-top:4px solid transparent;border-bottom:4px solid transparent;border-right:4px solid #404040"></div>
<div class="a" style="left:188px;top:792px;width:0;height:0;border-top:4px solid transparent;border-bottom:4px solid transparent;border-left:4px solid #404040"></div>
<div class="a " style="left:66px;top:788px;width:57px;height:15px;border:1px solid #8a8a8a;border-radius:2px;background:linear-gradient(#f4f4f4,#cdcdcd)"></div>
<div class="a " style="left:90px;top:792px;width:1px;height:7px;background:#505050"></div>
<div class="a " style="left:93px;top:792px;width:1px;height:7px;background:#505050"></div>
<div class="a " style="left:96px;top:792px;width:1px;height:7px;background:#505050"></div>
<div class="a " style="left:46px;top:811px;width:172px;height:1px;background:#b0b0b0"></div>
<div class="a " style="left:46px;top:812px;width:172px;height:1px;background:#fafafa"></div>
<div class="a " style="left:118px;top:808px;width:28px;height:6px;background:#d0d0d0;border:1px solid #a8a8a8"></div>
<div class="a " style="left:4px;top:824px;width:1182px;height:69px;background:linear-gradient(#eaeaea,#e0e0e0 40%,#cccccc)"></div>
<div class="a " style="left:4px;top:825px;width:183px;height:32px;border-right:1px solid #b8b8b8;border-bottom:1px solid #c4c4c4;background:linear-gradient(#e6e6e6,#d8d8d8)"></div>
<div class="a grip" style="left:9px;top:830px;height:24px"></div>
<div class="a " style="left:16px;top:831px;width:22px;height:20px;background:#a0a4a8"></div>
<svg class="a" style="left:16px;top:831px;" width="22" height="20" viewBox="0 0 22 20"><path d="M5 14l4-7 5 1 3 5-4 4h-6z" fill="#b0b0a8" stroke="#909088"/><path d="M9 7v-3M12 8v-4" stroke="#909088"/></svg>
<svg class="a" style="left:46px;top:830px;" width="25" height="24" viewBox="0 0 25 24"><path d="M2 5l5-2.500 6 2v7l-5.500 3-5.500-2.500z" fill="#f0b820"/><path d="M2 5l5-2.500 6 2-5.500 3z" fill="#fff4b0"/><path d="M2 5l5.500 2.500v7l-5.500-2.500z" fill="#fcd850"/><path d="M1 14l5-2.500 6 2v7l-5.500 3-5.500-2.500z" fill="#f0b820"/><path d="M1 14l5-2.500 6 2-5.500 3z" fill="#fff4b0"/><path d="M1 14l5.500 2.500v7l-5.500-2.500z" fill="#fcd850"/><path d="M9 14l5-2.500 6 2v7l-5.500 3-5.500-2.500z" fill="#f0b820"/><path d="M9 14l5-2.500 6 2-5.500 3z" fill="#fff4b0"/><path d="M9 14l5.500 2.500v7l-5.500-2.500z" fill="#fcd850"/><path d="M15 5h8M19 1v8" stroke="#1040e0" stroke-width="1.800"/></svg>
<svg class="a" style="left:77px;top:830px;" width="25" height="24" viewBox="0 0 25 24"><path d="M7 9l5-2.500 6 2v7l-5.500 3-5.500-2.500z" fill="#f0b820"/><path d="M7 9l5-2.500 6 2-5.500 3z" fill="#fff4b0"/><path d="M7 9l5.500 2.500v7l-5.500-2.500z" fill="#fcd850"/><path d="M14 6q4-3 8-3M16 9q3-2 7-2M18 12q3-1 5-1M3 14q-1 3-1 6M6 17q-1 3 0 5M9 20q0 2 1 3" stroke="#3070e0" stroke-width="1.400" fill="none"/></svg>
<svg class="a" style="left:108px;top:829px;" width="24" height="25" viewBox="0 0 24 25"><path d="M3 2l8 6-8 6zM21 2l-8 6 8 6z" fill="#1020d0"/><path d="M12 1v24" stroke="#101010" stroke-width="1.400" stroke-dasharray="3 2"/><rect x="2" y="16" width="8" height="8" fill="#f8e820" stroke="#404000"/><path d="M14 24v-9l8 9z" fill="#e01010"/></svg>
<div class="a sep" style="left:138px;top:829px;height:26px"></div>
<svg class="a" style="left:146px;top:830px;" width="23" height="24" viewBox="0 0 23 24"><path d="M1 4l5-2.500 6 2v7l-5.500 3-5.500-2.500z" fill="#f0b820"/><path d="M1 4l5-2.500 6 2-5.500 3z" fill="#fff4b0"/><path d="M1 4l5.500 2.500v7l-5.500-2.500z" fill="#fcd850"/><path d="M1 14l5-2.500 6 2v7l-5.500 3-5.500-2.500z" fill="#f0b820"/><path d="M1 14l5-2.500 6 2-5.500 3z" fill="#fff4b0"/><path d="M1 14l5.500 2.500v7l-5.500-2.500z" fill="#fcd850"/><path d="M11 14l5-2.500 6 2v7l-5.500 3-5.500-2.500z" fill="#f0b820"/><path d="M11 14l5-2.500 6 2-5.500 3z" fill="#fff4b0"/><path d="M11 14l5.500 2.500v7l-5.500-2.500z" fill="#fcd850"/></svg>
<div class="a dd" style="left:177px;top:848px;border-top-color:#000"></div>
<div class="a " style="left:155px;top:858px;width:728px;height:35px;border-left:1px solid #f4f4f4;border-top:1px solid #f0f0f0;border-right:1px solid #b4b4b4;background:linear-gradient(#dedede,#cdcdcd)"></div>
<div class="a grip" style="left:159px;top:863px;height:24px"></div>
<svg class="a" style="left:165px;top:861px;" width="24" height="26" viewBox="0 0 24 26"><path d="M2 3l17 4v17l-17-4z" fill="#fff" stroke="#101010" stroke-width="1.400"/><rect x="5" y="7" width="5" height="5" fill="none" stroke="#101010"/><rect x="5" y="14" width="5" height="5" fill="none" stroke="#101010"/><rect x="11" y="13" width="6" height="7" fill="none" stroke="#101010"/><path d="M17 1l1.500 4 4-2-2.500 3.500 3.500 2-4.500 0-1 4-1-4-4 0 3.500-2z" fill="#f8e020"/></svg>
<div class="a " style="left:196px;top:863px;width:24px;height:23px;background:#8c9ca6"></div>
<svg class="a" style="left:196px;top:863px;" width="24" height="23" viewBox="0 0 24 23"><path d="M4 12l5-6 6 1 5 6-6 6-6-1z M9 6l1 12 M15 7l-1 12 M4 12l16 1" stroke="#9aa8b0" stroke-width="1.300" fill="#98a4ac"/></svg>
<div class="a t" style="left:224px;top:868px;font-size:12px;line-height:14px;color:#9c9c9c;">完成草图</div>
<svg class="a" style="left:279px;top:864px;" width="24" height="22" viewBox="0 0 24 22"><path d="M2 2v12q0 6 5 6t5-6v-6q0-5 4-5t4 5v8" stroke="#101010" stroke-width="1.600" fill="none"/><circle cx="2" cy="14" r="1.900" fill="#e01010"/><circle cx="12" cy="13" r="1.900" fill="#e01010"/><circle cx="20" cy="13" r="1.900" fill="#e01010"/></svg>
<svg class="a" style="left:312px;top:864px;" width="22" height="22" viewBox="0 0 22 22"><path d="M3 19l16-16" stroke="#101010" stroke-width="1.500"/><circle cx="3" cy="19" r="1.900" fill="#e01010"/><circle cx="19" cy="3" r="1.900" fill="#e01010"/></svg>
<svg class="a" style="left:341px;top:863px;" width="25" height="23" viewBox="0 0 25 23"><path d="M3 3q17 0 19 17" stroke="#101010" stroke-width="1.700" fill="none"/><circle cx="3" cy="3" r="1.900" fill="#e01010"/><circle cx="16" cy="7" r="1.900" fill="#e01010"/><circle cx="22" cy="20" r="1.900" fill="#e01010"/></svg>
<svg class="a" style="left:372px;top:864px;" width="25" height="23" viewBox="0 0 25 23"><circle cx="12.500" cy="11.500" r="10" fill="none" stroke="#101010" stroke-width="1.500"/></svg>
<svg class="a" style="left:404px;top:864px;" width="23" height="22" viewBox="0 0 23 22"><path d="M1 3h12q7 0 7 7v11" stroke="#b89090" stroke-width="1.400" fill="none"/></svg>
<svg class="a" style="left:434px;top:864px;" width="24" height="22" viewBox="0 0 24 22"><path d="M1 3h12l8 8v10" stroke="#b89090" stroke-width="1.400" fill="none"/></svg>
<svg class="a" style="left:465px;top:865px;" width="25" height="21" viewBox="0 0 25 21"><rect x="3" y="3" width="19" height="14" fill="none" stroke="#101010" stroke-width="1.500"/><circle cx="3" cy="3" r="1.900" fill="#e01010"/><circle cx="22" cy="17" r="1.900" fill="#e01010"/></svg>
<svg class="a" style="left:497px;top:863px;" width="25" height="23" viewBox="0 0 25 23"><path d="M2 9l6-6 4 13 6-8 5 2" stroke="#808080" stroke-width="1.400" fill="none"/><circle cx="8" cy="3" r="1.900" fill="#909090"/><circle cx="23" cy="10" r="1.900" fill="#909090"/><circle cx="2" cy="9" r="1.900" fill="#e01010"/><circle cx="12" cy="16" r="1.900" fill="#e01010"/><circle cx="18" cy="8" r="1.900" fill="#e01010"/></svg>
<svg class="a" style="left:530px;top:865px;" width="20" height="20" viewBox="0 0 20 20"><path d="M1 10h18M10 1v18" stroke="#101010" stroke-width="1.700"/></svg>
<svg class="a" style="left:557px;top:863px;" width="25" height="24" viewBox="0 0 25 24"><path d="M2 9l4-7h10q7 3 3 10l-6 9h-9q-3-6-2-12z" fill="none" stroke="#a09898" stroke-width="1.200"/><path d="M6 10l2-4h6q4 2 2 6l-4 6h-5q-2-4-1-8z" fill="none" stroke="#b09898" stroke-width="1.200"/></svg>
<div class="a dd" style="left:590px;top:873px;border-top-color:#000"></div>
<div class="a sep" style="left:601px;top:862px;height:26px"></div>
<svg class="a" style="left:607px;top:863px;" width="25" height="24" viewBox="0 0 25 24"><path d="M1 19h22M6 2l12 20" stroke="#b8a0a8" stroke-width="1.400"/><path d="M14 10l8-6 2 3-8 6z" fill="#a8b098"/></svg>
<svg class="a" style="left:637px;top:863px;" width="25" height="24" viewBox="0 0 25 24"><path d="M1 19h14M8 2l12 20" stroke="#b8a0a8" stroke-width="1.400"/><path d="M14 10l8-6 2 3-8 6z" fill="#a8b098"/></svg>
<div class="a sep" style="left:669px;top:862px;height:26px"></div>
<svg class="a" style="left:675px;top:863px;" width="25" height="24" viewBox="0 0 25 24"><path d="M2 8v14M22 8v14M2 15h20" stroke="#707070" stroke-width="1.300"/><path d="M9 15l9-10 3 2-9 10z" fill="#a8b098"/><path d="M2 15l3-2v4zM22 15l-3-2v4z" fill="#707070"/></svg>
<div class="a dd" style="left:707px;top:873px;border-top-color:#000"></div>
<div class="a sep" style="left:718px;top:862px;height:26px"></div>
<svg class="a" style="left:725px;top:864px;" width="23" height="22" viewBox="0 0 23 22"><path d="M2 10l9-8M7 12l9-8" stroke="#b8a0a8" stroke-width="1.500"/><path d="M10 20h12M16 20v-9" stroke="#a8a0a8" stroke-width="1.500"/></svg>
<svg class="a" style="left:755px;top:864px;" width="23" height="22" viewBox="0 0 23 22"><path d="M2 20l9-14h11" stroke="#a8a0a8" stroke-width="1.400" fill="none"/><circle cx="11" cy="6" r="2.200" fill="#a070a0"/></svg>
<div class="a dd" style="left:787px;top:873px;border-top-color:#000"></div>
<svg class="a" style="left:798px;top:863px;" width="24" height="24" viewBox="0 0 24 24"><circle cx="13" cy="15" r="7" fill="none" stroke="#a09898" stroke-width="1.400"/><path d="M2 4l20 9M3 16l14-14" stroke="#a8a0a8" stroke-width="1.400"/></svg>
<svg class="a" style="left:829px;top:863px;" width="24" height="24" viewBox="0 0 24 24"><path d="M1 6l6 4-6 4z" fill="#90c098"/><path d="M9 10l9-8M14 12l9-8" stroke="#b8a0a8" stroke-width="1.500"/><path d="M10 22h12M16 22v-9" stroke="#a8a0a8" stroke-width="1.500"/></svg>
<div class="a dd" style="left:861px;top:873px;border-top-color:#000"></div>
<div class="a dd" style="left:872px;top:882px;border-top-color:#000"></div>
<div class="a " style="left:0px;top:30px;width:4px;height:870px;background:#000"></div>
<div class="a " style="left:1187px;top:30px;width:3px;height:870px;background:#000"></div>
<div class="a " style="left:0px;top:893px;width:1190px;height:7px;background:#000"></div>
<div class="a " style="left:804px;top:895px;width:38px;height:5px;background:#e8f0fc;border:2px solid #3a86e4;border-bottom:0"></div>
<div class="a " style="left:0px;top:897px;width:3px;height:3px;background:#2a8ad0;border-top-right-radius:3px"></div>
</body>
</html>
